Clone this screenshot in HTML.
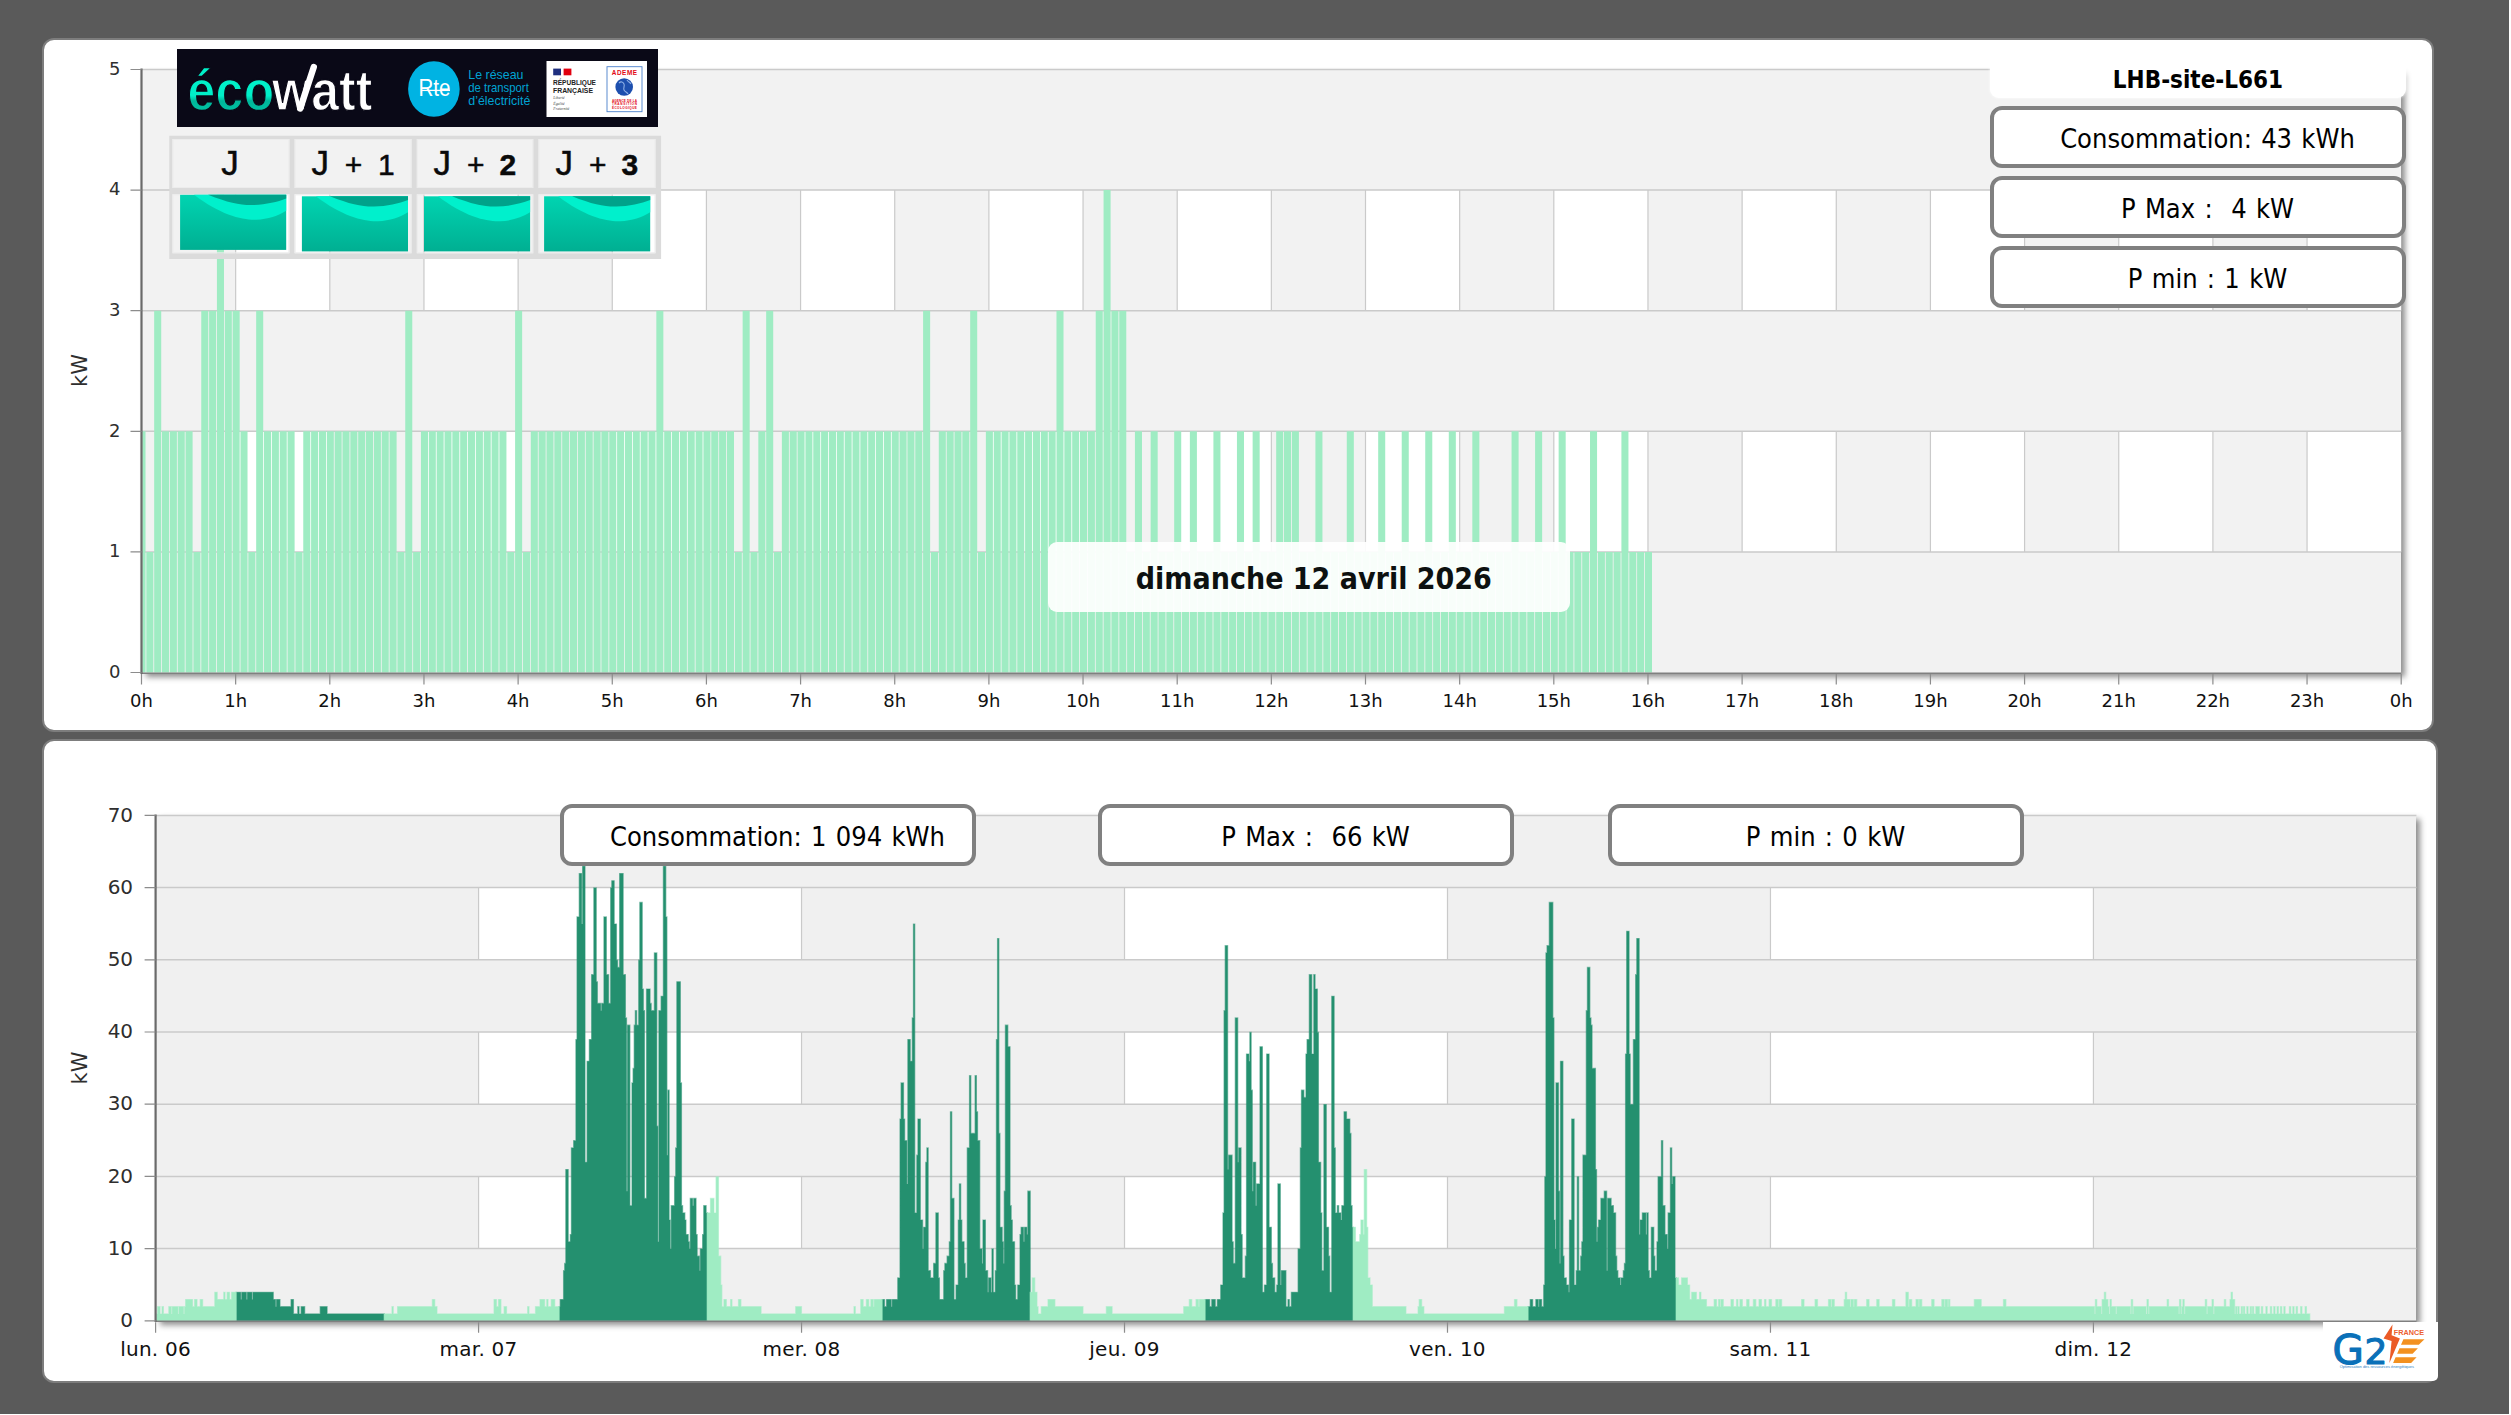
<!DOCTYPE html>
<html lang="fr"><head><meta charset="utf-8"><title>LHB-site-L661</title>
<style>
html,body{margin:0;padding:0}
body{width:2511px;height:1415px;background:#fff;position:relative;overflow:hidden;font-family:"DejaVu Sans Condensed","DejaVu Sans","Liberation Sans",sans-serif}
.panel{position:absolute;background:#fff;border:2px solid #7d7d7d;border-radius:12px;box-sizing:border-box}
.plot{position:absolute;box-shadow:4px 4px 6px rgba(0,0,0,.45)}
svg{position:absolute;left:0;top:0}
.ax{font-family:"DejaVu Sans","Liberation Sans",sans-serif;font-size:18px;fill:#2e2e2e}
.box{position:absolute;box-sizing:border-box;background:#fff;border:4px solid #808080;border-radius:12px;font-size:27px;color:#000;text-align:center;white-space:pre;padding-left:19px;word-spacing:1.6px}
.abs{position:absolute}
.box,#ttl,#dlab{font-stretch:condensed}
</style></head><body>
<div class="abs" style="left:0;top:0;width:2509.3px;height:1413.6px;background:#5a5a5a"></div>
<div class="panel" style="left:42px;top:38px;width:2392px;height:693.5px"></div>
<div class="panel" style="left:42px;top:738.5px;width:2396px;height:644px"></div>
<div class="plot" style="left:141.5px;top:69.5px;width:2259.7px;height:603px;background:#f2f2f2"></div>
<div class="plot" style="left:155.6px;top:815.4px;width:2260.8px;height:505.4px;background:#f0f0f0"></div>
<svg width="2511" height="1415" viewBox="0 0 2511 1415">
<rect x="235.65" y="431.3" width="94.15" height="120.6" fill="#fff"/><rect x="423.96" y="431.3" width="94.15" height="120.6" fill="#fff"/><rect x="612.27" y="431.3" width="94.15" height="120.6" fill="#fff"/><rect x="800.58" y="431.3" width="94.15" height="120.6" fill="#fff"/><rect x="988.89" y="431.3" width="94.15" height="120.6" fill="#fff"/><rect x="1177.2" y="431.3" width="94.15" height="120.6" fill="#fff"/><rect x="1365.5" y="431.3" width="94.15" height="120.6" fill="#fff"/><rect x="1553.81" y="431.3" width="94.15" height="120.6" fill="#fff"/><rect x="1742.12" y="431.3" width="94.15" height="120.6" fill="#fff"/><rect x="1930.43" y="431.3" width="94.15" height="120.6" fill="#fff"/><rect x="2118.74" y="431.3" width="94.15" height="120.6" fill="#fff"/><rect x="2307.05" y="431.3" width="94.15" height="120.6" fill="#fff"/><path d="M235.65 431.3v120.6M329.81 431.3v120.6M423.96 431.3v120.6M518.12 431.3v120.6M612.27 431.3v120.6M706.42 431.3v120.6M800.58 431.3v120.6M894.73 431.3v120.6M988.89 431.3v120.6M1083.04 431.3v120.6M1177.2 431.3v120.6M1271.35 431.3v120.6M1365.5 431.3v120.6M1459.66 431.3v120.6M1553.81 431.3v120.6M1647.97 431.3v120.6M1742.12 431.3v120.6M1836.27 431.3v120.6M1930.43 431.3v120.6M2024.58 431.3v120.6M2118.74 431.3v120.6M2212.89 431.3v120.6M2307.05 431.3v120.6" stroke="#cacaca" stroke-width="1.2" fill="none"/><rect x="235.65" y="190.1" width="94.15" height="120.6" fill="#fff"/><rect x="423.96" y="190.1" width="94.15" height="120.6" fill="#fff"/><rect x="612.27" y="190.1" width="94.15" height="120.6" fill="#fff"/><rect x="800.58" y="190.1" width="94.15" height="120.6" fill="#fff"/><rect x="988.89" y="190.1" width="94.15" height="120.6" fill="#fff"/><rect x="1177.2" y="190.1" width="94.15" height="120.6" fill="#fff"/><rect x="1365.5" y="190.1" width="94.15" height="120.6" fill="#fff"/><rect x="1553.81" y="190.1" width="94.15" height="120.6" fill="#fff"/><rect x="1742.12" y="190.1" width="94.15" height="120.6" fill="#fff"/><rect x="1930.43" y="190.1" width="94.15" height="120.6" fill="#fff"/><rect x="2118.74" y="190.1" width="94.15" height="120.6" fill="#fff"/><rect x="2307.05" y="190.1" width="94.15" height="120.6" fill="#fff"/><path d="M235.65 190.1v120.6M329.81 190.1v120.6M423.96 190.1v120.6M518.12 190.1v120.6M612.27 190.1v120.6M706.42 190.1v120.6M800.58 190.1v120.6M894.73 190.1v120.6M988.89 190.1v120.6M1083.04 190.1v120.6M1177.2 190.1v120.6M1271.35 190.1v120.6M1365.5 190.1v120.6M1459.66 190.1v120.6M1553.81 190.1v120.6M1647.97 190.1v120.6M1742.12 190.1v120.6M1836.27 190.1v120.6M1930.43 190.1v120.6M2024.58 190.1v120.6M2118.74 190.1v120.6M2212.89 190.1v120.6M2307.05 190.1v120.6" stroke="#cacaca" stroke-width="1.2" fill="none"/><path d="M141.5 551.9H2401.2M141.5 431.3H2401.2M141.5 310.7H2401.2M141.5 190.1H2401.2M141.5 69.5H2401.2" stroke="#cacaca" stroke-width="1.5" fill="none"/>
<path d="M142.3 672.5V431.3H145.52V672.5ZM146.33 672.5V551.9H153.37V672.5ZM154.17 672.5V310.7H161.21V672.5ZM162.02 672.5V431.3H169.06V672.5ZM169.86 672.5V431.3H176.9V672.5ZM177.71 672.5V431.3H184.75V672.5ZM185.56 672.5V431.3H192.6V672.5ZM193.4 672.5V551.9H200.44V672.5ZM201.25 672.5V310.7H208.29V672.5ZM209.1 672.5V310.7H216.14V672.5ZM216.94 672.5V190.1H223.98V672.5ZM224.79 672.5V310.7H231.83V672.5ZM232.63 672.5V310.7H239.67V672.5ZM240.48 672.5V431.3H247.52V672.5ZM248.33 672.5V551.9H255.37V672.5ZM256.17 672.5V310.7H263.21V672.5ZM264.02 672.5V431.3H271.06V672.5ZM271.87 672.5V431.3H278.91V672.5ZM279.71 672.5V431.3H286.75V672.5ZM287.56 672.5V431.3H294.6V672.5ZM295.4 672.5V551.9H302.44V672.5ZM303.25 672.5V431.3H310.29V672.5ZM311.1 672.5V431.3H318.14V672.5ZM318.94 672.5V431.3H325.98V672.5ZM326.79 672.5V431.3H333.83V672.5ZM334.63 672.5V431.3H341.67V672.5ZM342.48 672.5V431.3H349.52V672.5ZM350.33 672.5V431.3H357.37V672.5ZM358.17 672.5V431.3H365.21V672.5ZM366.02 672.5V431.3H373.06V672.5ZM373.87 672.5V431.3H380.91V672.5ZM381.71 672.5V431.3H388.75V672.5ZM389.56 672.5V431.3H396.6V672.5ZM397.4 672.5V551.9H404.44V672.5ZM405.25 672.5V310.7H412.29V672.5ZM413.1 672.5V551.9H420.14V672.5ZM420.94 672.5V431.3H427.98V672.5ZM428.79 672.5V431.3H435.83V672.5ZM436.63 672.5V431.3H443.67V672.5ZM444.48 672.5V431.3H451.52V672.5ZM452.33 672.5V431.3H459.37V672.5ZM460.17 672.5V431.3H467.21V672.5ZM468.02 672.5V431.3H475.06V672.5ZM475.87 672.5V431.3H482.91V672.5ZM483.71 672.5V431.3H490.75V672.5ZM491.56 672.5V431.3H498.6V672.5ZM499.4 672.5V431.3H506.44V672.5ZM507.25 672.5V551.9H514.29V672.5ZM515.1 672.5V310.7H522.14V672.5ZM522.94 672.5V551.9H529.98V672.5ZM530.79 672.5V431.3H537.83V672.5ZM538.64 672.5V431.3H545.68V672.5ZM546.48 672.5V431.3H553.52V672.5ZM554.33 672.5V431.3H561.37V672.5ZM562.17 672.5V431.3H569.21V672.5ZM570.02 672.5V431.3H577.06V672.5ZM577.87 672.5V431.3H584.91V672.5ZM585.71 672.5V431.3H592.75V672.5ZM593.56 672.5V431.3H600.6V672.5ZM601.4 672.5V431.3H608.44V672.5ZM609.25 672.5V431.3H616.29V672.5ZM617.1 672.5V431.3H624.14V672.5ZM624.94 672.5V431.3H631.98V672.5ZM632.79 672.5V431.3H639.83V672.5ZM640.64 672.5V431.3H647.68V672.5ZM648.48 672.5V431.3H655.52V672.5ZM656.33 672.5V310.7H663.37V672.5ZM664.17 672.5V431.3H671.21V672.5ZM672.02 672.5V431.3H679.06V672.5ZM679.87 672.5V431.3H686.91V672.5ZM687.71 672.5V431.3H694.75V672.5ZM695.56 672.5V431.3H702.6V672.5ZM703.4 672.5V431.3H710.44V672.5ZM711.25 672.5V431.3H718.29V672.5ZM719.1 672.5V431.3H726.14V672.5ZM726.94 672.5V431.3H733.98V672.5ZM734.79 672.5V551.9H741.83V672.5ZM742.64 672.5V310.7H749.68V672.5ZM750.48 672.5V551.9H757.52V672.5ZM758.33 672.5V431.3H765.37V672.5ZM766.17 672.5V310.7H773.21V672.5ZM774.02 672.5V551.9H781.06V672.5ZM781.87 672.5V431.3H788.91V672.5ZM789.71 672.5V431.3H796.75V672.5ZM797.56 672.5V431.3H804.6V672.5ZM805.41 672.5V431.3H812.45V672.5ZM813.25 672.5V431.3H820.29V672.5ZM821.1 672.5V431.3H828.14V672.5ZM828.94 672.5V431.3H835.98V672.5ZM836.79 672.5V431.3H843.83V672.5ZM844.64 672.5V431.3H851.68V672.5ZM852.48 672.5V431.3H859.52V672.5ZM860.33 672.5V431.3H867.37V672.5ZM868.17 672.5V431.3H875.21V672.5ZM876.02 672.5V431.3H883.06V672.5ZM883.87 672.5V431.3H890.91V672.5ZM891.71 672.5V431.3H898.75V672.5ZM899.56 672.5V431.3H906.6V672.5ZM907.41 672.5V431.3H914.45V672.5ZM915.25 672.5V431.3H922.29V672.5ZM923.1 672.5V310.7H930.14V672.5ZM930.94 672.5V551.9H937.98V672.5ZM938.79 672.5V431.3H945.83V672.5ZM946.64 672.5V431.3H953.68V672.5ZM954.48 672.5V431.3H961.52V672.5ZM962.33 672.5V431.3H969.37V672.5ZM970.18 672.5V310.7H977.22V672.5ZM978.02 672.5V551.9H985.06V672.5ZM985.87 672.5V431.3H992.91V672.5ZM993.71 672.5V431.3H1000.75V672.5ZM1001.56 672.5V431.3H1008.6V672.5ZM1009.41 672.5V431.3H1016.45V672.5ZM1017.25 672.5V431.3H1024.29V672.5ZM1025.1 672.5V431.3H1032.14V672.5ZM1032.94 672.5V431.3H1039.98V672.5ZM1040.79 672.5V431.3H1047.83V672.5ZM1048.64 672.5V431.3H1055.68V672.5ZM1056.48 672.5V310.7H1063.52V672.5ZM1064.33 672.5V431.3H1071.37V672.5ZM1072.18 672.5V431.3H1079.22V672.5ZM1080.02 672.5V431.3H1087.06V672.5ZM1087.87 672.5V431.3H1094.91V672.5ZM1095.71 672.5V310.7H1102.75V672.5ZM1103.56 672.5V190.1H1110.6V672.5ZM1111.41 672.5V310.7H1118.45V672.5ZM1119.25 672.5V310.7H1126.29V672.5ZM1127.1 672.5V551.9H1134.14V672.5ZM1134.94 672.5V431.3H1141.98V672.5ZM1142.79 672.5V551.9H1149.83V672.5ZM1150.64 672.5V431.3H1157.68V672.5ZM1158.48 672.5V551.9H1165.52V672.5ZM1166.33 672.5V551.9H1173.37V672.5ZM1174.18 672.5V431.3H1181.22V672.5ZM1182.02 672.5V551.9H1189.06V672.5ZM1189.87 672.5V431.3H1196.91V672.5ZM1197.71 672.5V551.9H1204.75V672.5ZM1205.56 672.5V551.9H1212.6V672.5ZM1213.41 672.5V431.3H1220.45V672.5ZM1221.25 672.5V551.9H1228.29V672.5ZM1229.1 672.5V551.9H1236.14V672.5ZM1236.95 672.5V431.3H1243.99V672.5ZM1244.79 672.5V551.9H1251.83V672.5ZM1252.64 672.5V431.3H1259.68V672.5ZM1260.48 672.5V551.9H1267.52V672.5ZM1268.33 672.5V551.9H1275.37V672.5ZM1276.18 672.5V431.3H1283.22V672.5ZM1284.02 672.5V431.3H1291.06V672.5ZM1291.87 672.5V431.3H1298.91V672.5ZM1299.71 672.5V551.9H1306.75V672.5ZM1307.56 672.5V551.9H1314.6V672.5ZM1315.41 672.5V431.3H1322.45V672.5ZM1323.25 672.5V551.9H1330.29V672.5ZM1331.1 672.5V551.9H1338.14V672.5ZM1338.95 672.5V551.9H1345.99V672.5ZM1346.79 672.5V431.3H1353.83V672.5ZM1354.64 672.5V551.9H1361.68V672.5ZM1362.48 672.5V551.9H1369.52V672.5ZM1370.33 672.5V551.9H1377.37V672.5ZM1378.18 672.5V431.3H1385.22V672.5ZM1386.02 672.5V551.9H1393.06V672.5ZM1393.87 672.5V551.9H1400.91V672.5ZM1401.72 672.5V431.3H1408.76V672.5ZM1409.56 672.5V551.9H1416.6V672.5ZM1417.41 672.5V551.9H1424.45V672.5ZM1425.25 672.5V431.3H1432.29V672.5ZM1433.1 672.5V551.9H1440.14V672.5ZM1440.95 672.5V551.9H1447.99V672.5ZM1448.79 672.5V431.3H1455.83V672.5ZM1456.64 672.5V551.9H1463.68V672.5ZM1464.48 672.5V551.9H1471.52V672.5ZM1472.33 672.5V431.3H1479.37V672.5ZM1480.18 672.5V551.9H1487.22V672.5ZM1488.02 672.5V551.9H1495.06V672.5ZM1495.87 672.5V551.9H1502.91V672.5ZM1503.72 672.5V551.9H1510.76V672.5ZM1511.56 672.5V431.3H1518.6V672.5ZM1519.41 672.5V551.9H1526.45V672.5ZM1527.25 672.5V551.9H1534.29V672.5ZM1535.1 672.5V431.3H1542.14V672.5ZM1542.95 672.5V551.9H1549.99V672.5ZM1550.79 672.5V551.9H1557.83V672.5ZM1558.64 672.5V431.3H1565.68V672.5ZM1566.48 672.5V551.9H1573.52V672.5ZM1574.33 672.5V551.9H1581.37V672.5ZM1582.18 672.5V551.9H1589.22V672.5ZM1590.02 672.5V431.3H1597.06V672.5ZM1597.87 672.5V551.9H1604.91V672.5ZM1605.72 672.5V551.9H1612.76V672.5ZM1613.56 672.5V551.9H1620.6V672.5ZM1621.41 672.5V431.3H1628.45V672.5ZM1629.25 672.5V551.9H1636.29V672.5ZM1637.1 672.5V551.9H1644.14V672.5ZM1644.95 672.5V551.9H1651.99V672.5Z" fill="#9fecc3"/>
<path d="M141.5 673.2H2401.2" stroke="#808080" stroke-width="1.4" fill="none"/><path d="M141.5 68.5V673.9" stroke="#6a6a6a" stroke-width="2.2" fill="none"/><path d="M141.5 672.5h-11M141.5 551.9h-11M141.5 431.3h-11M141.5 310.7h-11M141.5 190.1h-11M141.5 69.5h-11M141.5 674v10.5M235.65 674v10.5M329.81 674v10.5M423.96 674v10.5M518.12 674v10.5M612.27 674v10.5M706.42 674v10.5M800.58 674v10.5M894.73 674v10.5M988.89 674v10.5M1083.04 674v10.5M1177.2 674v10.5M1271.35 674v10.5M1365.5 674v10.5M1459.66 674v10.5M1553.81 674v10.5M1647.97 674v10.5M1742.12 674v10.5M1836.27 674v10.5M1930.43 674v10.5M2024.58 674v10.5M2118.74 674v10.5M2212.89 674v10.5M2307.05 674v10.5M2401.2 674v10.5" stroke="#8c8c8c" stroke-width="1.2" fill="none"/>
<text class="ax" x="120.5" y="677.7" text-anchor="end">0</text><text class="ax" x="120.5" y="557.1" text-anchor="end">1</text><text class="ax" x="120.5" y="436.5" text-anchor="end">2</text><text class="ax" x="120.5" y="315.9" text-anchor="end">3</text><text class="ax" x="120.5" y="195.3" text-anchor="end">4</text><text class="ax" x="120.5" y="74.7" text-anchor="end">5</text><text class="ax" fill="#111" style="fill:#111" x="141.5" y="707" text-anchor="middle">0h</text><text class="ax" fill="#111" style="fill:#111" x="235.65" y="707" text-anchor="middle">1h</text><text class="ax" fill="#111" style="fill:#111" x="329.81" y="707" text-anchor="middle">2h</text><text class="ax" fill="#111" style="fill:#111" x="423.96" y="707" text-anchor="middle">3h</text><text class="ax" fill="#111" style="fill:#111" x="518.12" y="707" text-anchor="middle">4h</text><text class="ax" fill="#111" style="fill:#111" x="612.27" y="707" text-anchor="middle">5h</text><text class="ax" fill="#111" style="fill:#111" x="706.42" y="707" text-anchor="middle">6h</text><text class="ax" fill="#111" style="fill:#111" x="800.58" y="707" text-anchor="middle">7h</text><text class="ax" fill="#111" style="fill:#111" x="894.73" y="707" text-anchor="middle">8h</text><text class="ax" fill="#111" style="fill:#111" x="988.89" y="707" text-anchor="middle">9h</text><text class="ax" fill="#111" style="fill:#111" x="1083.04" y="707" text-anchor="middle">10h</text><text class="ax" fill="#111" style="fill:#111" x="1177.2" y="707" text-anchor="middle">11h</text><text class="ax" fill="#111" style="fill:#111" x="1271.35" y="707" text-anchor="middle">12h</text><text class="ax" fill="#111" style="fill:#111" x="1365.5" y="707" text-anchor="middle">13h</text><text class="ax" fill="#111" style="fill:#111" x="1459.66" y="707" text-anchor="middle">14h</text><text class="ax" fill="#111" style="fill:#111" x="1553.81" y="707" text-anchor="middle">15h</text><text class="ax" fill="#111" style="fill:#111" x="1647.97" y="707" text-anchor="middle">16h</text><text class="ax" fill="#111" style="fill:#111" x="1742.12" y="707" text-anchor="middle">17h</text><text class="ax" fill="#111" style="fill:#111" x="1836.27" y="707" text-anchor="middle">18h</text><text class="ax" fill="#111" style="fill:#111" x="1930.43" y="707" text-anchor="middle">19h</text><text class="ax" fill="#111" style="fill:#111" x="2024.58" y="707" text-anchor="middle">20h</text><text class="ax" fill="#111" style="fill:#111" x="2118.74" y="707" text-anchor="middle">21h</text><text class="ax" fill="#111" style="fill:#111" x="2212.89" y="707" text-anchor="middle">22h</text><text class="ax" fill="#111" style="fill:#111" x="2307.05" y="707" text-anchor="middle">23h</text><text class="ax" fill="#111" style="fill:#111" x="2401.2" y="707" text-anchor="middle">0h</text><text class="ax" style="font-size:21px" transform="translate(86.5 370.5) rotate(-90)" text-anchor="middle">kW</text>
<rect x="478.57" y="1176.4" width="322.97" height="72.2" fill="#fff"/><rect x="1124.51" y="1176.4" width="322.97" height="72.2" fill="#fff"/><rect x="1770.46" y="1176.4" width="322.97" height="72.2" fill="#fff"/><path d="M478.57 1176.4v72.2M801.54 1176.4v72.2M1124.51 1176.4v72.2M1447.49 1176.4v72.2M1770.46 1176.4v72.2M2093.43 1176.4v72.2" stroke="#cacaca" stroke-width="1.2" fill="none"/><rect x="478.57" y="1032" width="322.97" height="72.2" fill="#fff"/><rect x="1124.51" y="1032" width="322.97" height="72.2" fill="#fff"/><rect x="1770.46" y="1032" width="322.97" height="72.2" fill="#fff"/><path d="M478.57 1032v72.2M801.54 1032v72.2M1124.51 1032v72.2M1447.49 1032v72.2M1770.46 1032v72.2M2093.43 1032v72.2" stroke="#cacaca" stroke-width="1.2" fill="none"/><rect x="478.57" y="887.6" width="322.97" height="72.2" fill="#fff"/><rect x="1124.51" y="887.6" width="322.97" height="72.2" fill="#fff"/><rect x="1770.46" y="887.6" width="322.97" height="72.2" fill="#fff"/><path d="M478.57 887.6v72.2M801.54 887.6v72.2M1124.51 887.6v72.2M1447.49 887.6v72.2M1770.46 887.6v72.2M2093.43 887.6v72.2" stroke="#cacaca" stroke-width="1.2" fill="none"/><path d="M155.6 1248.6H2416.4M155.6 1176.4H2416.4M155.6 1104.2H2416.4M155.6 1032H2416.4M155.6 959.8H2416.4M155.6 887.6H2416.4M155.6 815.4H2416.4" stroke="#cacaca" stroke-width="1.5" fill="none"/>
<path d="M236.14 1320.8V1292.32H237.34V1320.8ZM237.26 1320.8V1292.32H238.46V1320.8ZM238.39 1320.8V1292.32H239.59V1320.8ZM239.51 1320.8V1292.32H240.71V1320.8ZM240.63 1320.8V1299.54H241.83V1320.8ZM241.75 1320.8V1292.32H242.95V1320.8ZM242.87 1320.8V1292.32H244.07V1320.8ZM243.99 1320.8V1292.32H245.19V1320.8ZM245.11 1320.8V1292.32H246.31V1320.8ZM246.24 1320.8V1299.54H247.44V1320.8ZM247.36 1320.8V1292.32H248.56V1320.8ZM248.48 1320.8V1292.32H249.68V1320.8ZM249.6 1320.8V1292.32H250.8V1320.8ZM250.72 1320.8V1292.32H251.92V1320.8ZM251.84 1320.8V1299.54H253.04V1320.8ZM252.96 1320.8V1292.32H254.16V1320.8ZM254.09 1320.8V1292.32H255.29V1320.8ZM255.21 1320.8V1292.32H256.41V1320.8ZM256.33 1320.8V1292.32H257.53V1320.8ZM257.45 1320.8V1292.32H258.65V1320.8ZM258.57 1320.8V1292.32H259.77V1320.8ZM259.69 1320.8V1292.32H260.89V1320.8ZM260.81 1320.8V1292.32H262.01V1320.8ZM261.94 1320.8V1292.32H263.14V1320.8ZM263.06 1320.8V1292.32H264.26V1320.8ZM264.18 1320.8V1292.32H265.38V1320.8ZM265.3 1320.8V1292.32H266.5V1320.8ZM266.42 1320.8V1292.32H267.62V1320.8ZM267.54 1320.8V1292.32H268.74V1320.8ZM268.66 1320.8V1292.32H269.86V1320.8ZM269.79 1320.8V1292.32H270.99V1320.8ZM270.91 1320.8V1292.32H272.11V1320.8ZM272.03 1320.8V1292.32H273.23V1320.8ZM273.15 1320.8V1299.54H274.35V1320.8ZM274.27 1320.8V1299.54H275.47V1320.8ZM275.39 1320.8V1306.76H276.59V1320.8ZM276.51 1320.8V1299.54H277.71V1320.8ZM277.64 1320.8V1299.54H278.84V1320.8ZM278.76 1320.8V1299.54H279.96V1320.8ZM279.88 1320.8V1306.76H281.08V1320.8ZM281 1320.8V1306.76H282.2V1320.8ZM282.12 1320.8V1306.76H283.32V1320.8ZM283.24 1320.8V1306.76H284.44V1320.8ZM284.36 1320.8V1306.76H285.56V1320.8ZM285.49 1320.8V1306.76H286.69V1320.8ZM286.61 1320.8V1306.76H287.81V1320.8ZM287.73 1320.8V1306.76H288.93V1320.8ZM288.85 1320.8V1306.76H290.05V1320.8ZM289.97 1320.8V1306.76H291.17V1320.8ZM291.09 1320.8V1299.54H292.29V1320.8ZM292.21 1320.8V1299.54H293.41V1320.8ZM293.34 1320.8V1313.98H294.54V1320.8ZM294.46 1320.8V1313.98H295.66V1320.8ZM295.58 1320.8V1313.98H296.78V1320.8ZM296.7 1320.8V1313.98H297.9V1320.8ZM297.82 1320.8V1306.76H299.02V1320.8ZM298.94 1320.8V1313.98H300.14V1320.8ZM300.06 1320.8V1313.98H301.26V1320.8ZM301.19 1320.8V1306.76H302.39V1320.8ZM302.31 1320.8V1306.76H303.51V1320.8ZM303.43 1320.8V1306.76H304.63V1320.8ZM304.55 1320.8V1313.98H305.75V1320.8ZM305.67 1320.8V1313.98H306.87V1320.8ZM306.79 1320.8V1313.98H307.99V1320.8ZM307.91 1320.8V1313.98H309.11V1320.8ZM309.04 1320.8V1313.98H310.24V1320.8ZM310.16 1320.8V1313.98H311.36V1320.8ZM311.28 1320.8V1313.98H312.48V1320.8ZM312.4 1320.8V1313.98H313.6V1320.8ZM313.52 1320.8V1313.98H314.72V1320.8ZM314.64 1320.8V1313.98H315.84V1320.8ZM315.76 1320.8V1313.98H316.96V1320.8ZM316.89 1320.8V1313.98H318.09V1320.8ZM318.01 1320.8V1313.98H319.21V1320.8ZM319.13 1320.8V1313.98H320.33V1320.8ZM320.25 1320.8V1306.76H321.45V1320.8ZM321.37 1320.8V1306.76H322.57V1320.8ZM322.49 1320.8V1306.76H323.69V1320.8ZM323.61 1320.8V1306.76H324.81V1320.8ZM324.74 1320.8V1306.76H325.94V1320.8ZM325.86 1320.8V1306.76H327.06V1320.8ZM326.98 1320.8V1313.98H328.18V1320.8ZM328.1 1320.8V1313.98H329.3V1320.8ZM329.22 1320.8V1313.98H330.42V1320.8ZM330.34 1320.8V1313.98H331.54V1320.8ZM331.46 1320.8V1313.98H332.66V1320.8ZM332.59 1320.8V1313.98H333.79V1320.8ZM333.71 1320.8V1313.98H334.91V1320.8ZM334.83 1320.8V1313.98H336.03V1320.8ZM335.95 1320.8V1313.98H337.15V1320.8ZM337.07 1320.8V1313.98H338.27V1320.8ZM338.19 1320.8V1313.98H339.39V1320.8ZM339.31 1320.8V1313.98H340.51V1320.8ZM340.44 1320.8V1313.98H341.64V1320.8ZM341.56 1320.8V1313.98H342.76V1320.8ZM342.68 1320.8V1313.98H343.88V1320.8ZM343.8 1320.8V1313.98H345V1320.8ZM344.92 1320.8V1313.98H346.12V1320.8ZM346.04 1320.8V1313.98H347.24V1320.8ZM347.16 1320.8V1313.98H348.36V1320.8ZM348.29 1320.8V1313.98H349.49V1320.8ZM349.41 1320.8V1313.98H350.61V1320.8ZM350.53 1320.8V1313.98H351.73V1320.8ZM351.65 1320.8V1313.98H352.85V1320.8ZM352.77 1320.8V1313.98H353.97V1320.8ZM353.89 1320.8V1313.98H355.09V1320.8ZM355.01 1320.8V1313.98H356.21V1320.8ZM356.14 1320.8V1313.98H357.34V1320.8ZM357.26 1320.8V1313.98H358.46V1320.8ZM358.38 1320.8V1313.98H359.58V1320.8ZM359.5 1320.8V1313.98H360.7V1320.8ZM360.62 1320.8V1313.98H361.82V1320.8ZM361.74 1320.8V1313.98H362.94V1320.8ZM362.86 1320.8V1313.98H364.06V1320.8ZM363.99 1320.8V1313.98H365.19V1320.8ZM365.11 1320.8V1313.98H366.31V1320.8ZM366.23 1320.8V1313.98H367.43V1320.8ZM367.35 1320.8V1313.98H368.55V1320.8ZM368.47 1320.8V1313.98H369.67V1320.8ZM369.59 1320.8V1313.98H370.79V1320.8ZM370.71 1320.8V1313.98H371.91V1320.8ZM371.84 1320.8V1313.98H373.04V1320.8ZM372.96 1320.8V1313.98H374.16V1320.8ZM374.08 1320.8V1313.98H375.28V1320.8ZM375.2 1320.8V1313.98H376.4V1320.8ZM376.32 1320.8V1313.98H377.52V1320.8ZM377.44 1320.8V1313.98H378.64V1320.8ZM378.56 1320.8V1313.98H379.76V1320.8ZM379.69 1320.8V1313.98H380.89V1320.8ZM380.81 1320.8V1313.98H382.01V1320.8ZM381.93 1320.8V1313.98H383.13V1320.8ZM383.05 1320.8V1313.98H384.25V1320.8ZM559.11 1320.8V1306.76H560.31V1320.8ZM560.24 1320.8V1299.54H561.44V1320.8ZM561.36 1320.8V1299.54H562.56V1320.8ZM562.48 1320.8V1299.54H563.68V1320.8ZM563.6 1320.8V1270.66H564.8V1320.8ZM564.72 1320.8V1263.44H565.92V1320.8ZM565.84 1320.8V1169.58H567.04V1320.8ZM566.96 1320.8V1169.58H568.16V1320.8ZM568.09 1320.8V1241.78H569.29V1320.8ZM569.21 1320.8V1241.78H570.41V1320.8ZM570.33 1320.8V1234.56H571.53V1320.8ZM571.45 1320.8V1147.92H572.65V1320.8ZM572.57 1320.8V1147.92H573.77V1320.8ZM573.69 1320.8V1140.7H574.89V1320.8ZM574.81 1320.8V1140.7H576.01V1320.8ZM575.94 1320.8V1039.62H577.14V1320.8ZM577.06 1320.8V916.88H578.26V1320.8ZM578.18 1320.8V916.88H579.38V1320.8ZM579.3 1320.8V873.56H580.5V1320.8ZM580.42 1320.8V873.56H581.62V1320.8ZM581.54 1320.8V924.1H582.74V1320.8ZM582.66 1320.8V866.34H583.86V1320.8ZM583.79 1320.8V866.34H584.99V1320.8ZM584.91 1320.8V1162.36H586.11V1320.8ZM586.03 1320.8V1162.36H587.23V1320.8ZM587.15 1320.8V1061.28H588.35V1320.8ZM588.27 1320.8V1061.28H589.47V1320.8ZM589.39 1320.8V1039.62H590.59V1320.8ZM590.51 1320.8V1039.62H591.71V1320.8ZM591.64 1320.8V974.64H592.84V1320.8ZM592.76 1320.8V974.64H593.96V1320.8ZM593.88 1320.8V888H595.08V1320.8ZM595 1320.8V888H596.2V1320.8ZM596.12 1320.8V981.86H597.32V1320.8ZM597.24 1320.8V1003.52H598.44V1320.8ZM598.36 1320.8V1003.52H599.56V1320.8ZM599.49 1320.8V1003.52H600.69V1320.8ZM600.61 1320.8V1010.74H601.81V1320.8ZM601.73 1320.8V1003.52H602.93V1320.8ZM602.85 1320.8V1003.52H604.05V1320.8ZM603.97 1320.8V916.88H605.17V1320.8ZM605.09 1320.8V916.88H606.29V1320.8ZM606.21 1320.8V974.64H607.41V1320.8ZM607.34 1320.8V974.64H608.54V1320.8ZM608.46 1320.8V1003.52H609.66V1320.8ZM609.58 1320.8V1003.52H610.78V1320.8ZM610.7 1320.8V888H611.9V1320.8ZM611.82 1320.8V880.78H613.02V1320.8ZM612.94 1320.8V880.78H614.14V1320.8ZM614.06 1320.8V924.1H615.26V1320.8ZM615.19 1320.8V924.1H616.39V1320.8ZM616.31 1320.8V960.2H617.51V1320.8ZM617.43 1320.8V967.42H618.63V1320.8ZM618.55 1320.8V967.42H619.75V1320.8ZM619.67 1320.8V873.56H620.87V1320.8ZM620.79 1320.8V873.56H621.99V1320.8ZM621.91 1320.8V873.56H623.11V1320.8ZM623.04 1320.8V974.64H624.24V1320.8ZM624.16 1320.8V974.64H625.36V1320.8ZM625.28 1320.8V1017.96H626.48V1320.8ZM626.4 1320.8V1191.24H627.6V1320.8ZM627.52 1320.8V1025.18H628.72V1320.8ZM628.64 1320.8V1025.18H629.84V1320.8ZM629.76 1320.8V1205.68H630.96V1320.8ZM630.89 1320.8V1205.68H632.09V1320.8ZM632.01 1320.8V1082.94H633.21V1320.8ZM633.13 1320.8V1068.5H634.33V1320.8ZM634.25 1320.8V1025.18H635.45V1320.8ZM635.37 1320.8V1010.74H636.57V1320.8ZM636.49 1320.8V1025.18H637.69V1320.8ZM637.61 1320.8V1025.18H638.81V1320.8ZM638.74 1320.8V960.2H639.94V1320.8ZM639.86 1320.8V902.44H641.06V1320.8ZM640.98 1320.8V902.44H642.18V1320.8ZM642.1 1320.8V989.08H643.3V1320.8ZM643.22 1320.8V1010.74H644.42V1320.8ZM644.34 1320.8V1198.46H645.54V1320.8ZM645.46 1320.8V1198.46H646.66V1320.8ZM646.59 1320.8V989.08H647.79V1320.8ZM647.71 1320.8V989.08H648.91V1320.8ZM648.83 1320.8V989.08H650.03V1320.8ZM649.95 1320.8V1003.52H651.15V1320.8ZM651.07 1320.8V1010.74H652.27V1320.8ZM652.19 1320.8V1010.74H653.39V1320.8ZM653.31 1320.8V1010.74H654.51V1320.8ZM654.44 1320.8V952.98H655.64V1320.8ZM655.56 1320.8V952.98H656.76V1320.8ZM656.68 1320.8V1126.26H657.88V1320.8ZM657.8 1320.8V1241.78H659V1320.8ZM658.92 1320.8V1010.74H660.12V1320.8ZM660.04 1320.8V1010.74H661.24V1320.8ZM661.16 1320.8V996.3H662.36V1320.8ZM662.29 1320.8V996.3H663.49V1320.8ZM663.41 1320.8V866.34H664.61V1320.8ZM664.53 1320.8V866.34H665.73V1320.8ZM665.65 1320.8V916.88H666.85V1320.8ZM666.77 1320.8V1155.14H667.97V1320.8ZM667.89 1320.8V1090.16H669.09V1320.8ZM669.01 1320.8V1220.12H670.21V1320.8ZM670.14 1320.8V1249H671.34V1320.8ZM671.26 1320.8V1205.68H672.46V1320.8ZM672.38 1320.8V1205.68H673.58V1320.8ZM673.5 1320.8V1205.68H674.7V1320.8ZM674.62 1320.8V1176.8H675.82V1320.8ZM675.74 1320.8V1147.92H676.94V1320.8ZM676.86 1320.8V981.86H678.06V1320.8ZM677.99 1320.8V981.86H679.19V1320.8ZM679.11 1320.8V981.86H680.31V1320.8ZM680.23 1320.8V1082.94H681.43V1320.8ZM681.35 1320.8V1205.68H682.55V1320.8ZM682.47 1320.8V1212.9H683.67V1320.8ZM683.59 1320.8V1212.9H684.79V1320.8ZM684.71 1320.8V1220.12H685.91V1320.8ZM685.84 1320.8V1234.56H687.04V1320.8ZM686.96 1320.8V1234.56H688.16V1320.8ZM688.08 1320.8V1241.78H689.28V1320.8ZM689.2 1320.8V1249H690.4V1320.8ZM690.32 1320.8V1198.46H691.52V1320.8ZM691.44 1320.8V1198.46H692.64V1320.8ZM692.56 1320.8V1205.68H693.76V1320.8ZM693.69 1320.8V1198.46H694.89V1320.8ZM694.81 1320.8V1198.46H696.01V1320.8ZM695.93 1320.8V1234.56H697.13V1320.8ZM697.05 1320.8V1256.22H698.25V1320.8ZM698.17 1320.8V1256.22H699.37V1320.8ZM699.29 1320.8V1270.66H700.49V1320.8ZM700.41 1320.8V1249H701.61V1320.8ZM701.54 1320.8V1249H702.74V1320.8ZM702.66 1320.8V1234.56H703.86V1320.8ZM703.78 1320.8V1205.68H704.98V1320.8ZM704.9 1320.8V1205.68H706.1V1320.8ZM706.02 1320.8V1212.9H707.22V1320.8ZM882.09 1320.8V1299.54H883.29V1320.8ZM883.21 1320.8V1299.54H884.41V1320.8ZM884.33 1320.8V1306.76H885.53V1320.8ZM885.45 1320.8V1306.76H886.65V1320.8ZM886.57 1320.8V1299.54H887.77V1320.8ZM887.69 1320.8V1299.54H888.89V1320.8ZM888.81 1320.8V1299.54H890.01V1320.8ZM889.94 1320.8V1299.54H891.14V1320.8ZM891.06 1320.8V1306.76H892.26V1320.8ZM892.18 1320.8V1299.54H893.38V1320.8ZM893.3 1320.8V1299.54H894.5V1320.8ZM894.42 1320.8V1299.54H895.62V1320.8ZM895.54 1320.8V1299.54H896.74V1320.8ZM896.66 1320.8V1299.54H897.86V1320.8ZM897.79 1320.8V1277.88H898.99V1320.8ZM898.91 1320.8V1277.88H900.11V1320.8ZM900.03 1320.8V1119.04H901.23V1320.8ZM901.15 1320.8V1082.94H902.35V1320.8ZM902.27 1320.8V1082.94H903.47V1320.8ZM903.39 1320.8V1119.04H904.59V1320.8ZM904.51 1320.8V1140.7H905.71V1320.8ZM905.64 1320.8V1140.7H906.84V1320.8ZM906.76 1320.8V1184.02H907.96V1320.8ZM907.88 1320.8V1039.62H909.08V1320.8ZM909 1320.8V1039.62H910.2V1320.8ZM910.12 1320.8V1061.28H911.32V1320.8ZM911.24 1320.8V1061.28H912.44V1320.8ZM912.36 1320.8V1017.96H913.56V1320.8ZM913.49 1320.8V924.1H914.69V1320.8ZM914.61 1320.8V1212.9H915.81V1320.8ZM915.73 1320.8V1212.9H916.93V1320.8ZM916.85 1320.8V1155.14H918.05V1320.8ZM917.97 1320.8V1119.04H919.17V1320.8ZM919.09 1320.8V1119.04H920.29V1320.8ZM920.21 1320.8V1220.12H921.41V1320.8ZM921.34 1320.8V1220.12H922.54V1320.8ZM922.46 1320.8V1249H923.66V1320.8ZM923.58 1320.8V1227.34H924.78V1320.8ZM924.7 1320.8V1227.34H925.9V1320.8ZM925.82 1320.8V1162.36H927.02V1320.8ZM926.94 1320.8V1147.92H928.14V1320.8ZM928.06 1320.8V1270.66H929.26V1320.8ZM929.19 1320.8V1270.66H930.39V1320.8ZM930.31 1320.8V1277.88H931.51V1320.8ZM931.43 1320.8V1277.88H932.63V1320.8ZM932.55 1320.8V1277.88H933.75V1320.8ZM933.67 1320.8V1263.44H934.87V1320.8ZM934.79 1320.8V1263.44H935.99V1320.8ZM935.91 1320.8V1212.9H937.11V1320.8ZM937.04 1320.8V1212.9H938.24V1320.8ZM938.16 1320.8V1277.88H939.36V1320.8ZM939.28 1320.8V1299.54H940.48V1320.8ZM940.4 1320.8V1299.54H941.6V1320.8ZM941.52 1320.8V1299.54H942.72V1320.8ZM942.64 1320.8V1299.54H943.84V1320.8ZM943.76 1320.8V1270.66H944.96V1320.8ZM944.89 1320.8V1263.44H946.09V1320.8ZM946.01 1320.8V1263.44H947.21V1320.8ZM947.13 1320.8V1256.22H948.33V1320.8ZM948.25 1320.8V1256.22H949.45V1320.8ZM949.37 1320.8V1241.78H950.57V1320.8ZM950.49 1320.8V1111.82H951.69V1320.8ZM951.61 1320.8V1198.46H952.81V1320.8ZM952.74 1320.8V1198.46H953.94V1320.8ZM953.86 1320.8V1299.54H955.06V1320.8ZM954.98 1320.8V1299.54H956.18V1320.8ZM956.1 1320.8V1285.1H957.3V1320.8ZM957.22 1320.8V1285.1H958.42V1320.8ZM958.34 1320.8V1220.12H959.54V1320.8ZM959.46 1320.8V1184.02H960.66V1320.8ZM960.59 1320.8V1220.12H961.79V1320.8ZM961.71 1320.8V1241.78H962.91V1320.8ZM962.83 1320.8V1241.78H964.03V1320.8ZM963.95 1320.8V1263.44H965.15V1320.8ZM965.07 1320.8V1277.88H966.27V1320.8ZM966.19 1320.8V1277.88H967.39V1320.8ZM967.31 1320.8V1147.92H968.51V1320.8ZM968.44 1320.8V1147.92H969.64V1320.8ZM969.56 1320.8V1075.72H970.76V1320.8ZM970.68 1320.8V1133.48H971.88V1320.8ZM971.8 1320.8V1133.48H973V1320.8ZM972.92 1320.8V1133.48H974.12V1320.8ZM974.04 1320.8V1133.48H975.24V1320.8ZM975.16 1320.8V1075.72H976.36V1320.8ZM976.29 1320.8V1111.82H977.49V1320.8ZM977.41 1320.8V1140.7H978.61V1320.8ZM978.53 1320.8V1140.7H979.73V1320.8ZM979.65 1320.8V1249H980.85V1320.8ZM980.77 1320.8V1249H981.97V1320.8ZM981.89 1320.8V1263.44H983.09V1320.8ZM983.01 1320.8V1220.12H984.21V1320.8ZM984.14 1320.8V1220.12H985.34V1320.8ZM985.26 1320.8V1270.66H986.46V1320.8ZM986.38 1320.8V1270.66H987.58V1320.8ZM987.5 1320.8V1292.32H988.7V1320.8ZM988.62 1320.8V1277.88H989.82V1320.8ZM989.74 1320.8V1277.88H990.94V1320.8ZM990.86 1320.8V1292.32H992.06V1320.8ZM991.99 1320.8V1249H993.19V1320.8ZM993.11 1320.8V1292.32H994.31V1320.8ZM994.23 1320.8V1292.32H995.43V1320.8ZM995.35 1320.8V1270.66H996.55V1320.8ZM996.47 1320.8V1039.62H997.67V1320.8ZM997.59 1320.8V938.54H998.79V1320.8ZM998.71 1320.8V1133.48H999.91V1320.8ZM999.84 1320.8V1227.34H1001.04V1320.8ZM1000.96 1320.8V1227.34H1002.16V1320.8ZM1002.08 1320.8V1241.78H1003.28V1320.8ZM1003.2 1320.8V1263.44H1004.4V1320.8ZM1004.32 1320.8V1191.24H1005.52V1320.8ZM1005.44 1320.8V1025.18H1006.64V1320.8ZM1006.56 1320.8V1025.18H1007.76V1320.8ZM1007.69 1320.8V1046.84H1008.89V1320.8ZM1008.81 1320.8V1046.84H1010.01V1320.8ZM1009.93 1320.8V1205.68H1011.13V1320.8ZM1011.05 1320.8V1220.12H1012.25V1320.8ZM1012.17 1320.8V1241.78H1013.37V1320.8ZM1013.29 1320.8V1241.78H1014.49V1320.8ZM1014.41 1320.8V1285.1H1015.61V1320.8ZM1015.54 1320.8V1299.54H1016.74V1320.8ZM1016.66 1320.8V1299.54H1017.86V1320.8ZM1017.78 1320.8V1285.1H1018.98V1320.8ZM1018.9 1320.8V1285.1H1020.1V1320.8ZM1020.02 1320.8V1234.56H1021.22V1320.8ZM1021.14 1320.8V1227.34H1022.34V1320.8ZM1022.26 1320.8V1227.34H1023.46V1320.8ZM1023.39 1320.8V1241.78H1024.59V1320.8ZM1024.51 1320.8V1227.34H1025.71V1320.8ZM1025.63 1320.8V1227.34H1026.83V1320.8ZM1026.75 1320.8V1234.56H1027.95V1320.8ZM1027.87 1320.8V1191.24H1029.07V1320.8ZM1028.99 1320.8V1191.24H1030.19V1320.8ZM1205.06 1320.8V1299.54H1206.26V1320.8ZM1206.18 1320.8V1299.54H1207.38V1320.8ZM1207.3 1320.8V1299.54H1208.5V1320.8ZM1208.42 1320.8V1299.54H1209.62V1320.8ZM1209.54 1320.8V1306.76H1210.74V1320.8ZM1210.66 1320.8V1306.76H1211.86V1320.8ZM1211.79 1320.8V1299.54H1212.99V1320.8ZM1212.91 1320.8V1299.54H1214.11V1320.8ZM1214.03 1320.8V1299.54H1215.23V1320.8ZM1215.15 1320.8V1306.76H1216.35V1320.8ZM1216.27 1320.8V1306.76H1217.47V1320.8ZM1217.39 1320.8V1299.54H1218.59V1320.8ZM1218.51 1320.8V1299.54H1219.71V1320.8ZM1219.64 1320.8V1299.54H1220.84V1320.8ZM1220.76 1320.8V1285.1H1221.96V1320.8ZM1221.88 1320.8V1285.1H1223.08V1320.8ZM1223 1320.8V1212.9H1224.2V1320.8ZM1224.12 1320.8V1010.74H1225.32V1320.8ZM1225.24 1320.8V945.76H1226.44V1320.8ZM1226.36 1320.8V945.76H1227.56V1320.8ZM1227.49 1320.8V1169.58H1228.69V1320.8ZM1228.61 1320.8V1155.14H1229.81V1320.8ZM1229.73 1320.8V1155.14H1230.93V1320.8ZM1230.85 1320.8V1155.14H1232.05V1320.8ZM1231.97 1320.8V1241.78H1233.17V1320.8ZM1233.09 1320.8V1263.44H1234.29V1320.8ZM1234.21 1320.8V1263.44H1235.41V1320.8ZM1235.34 1320.8V1017.96H1236.54V1320.8ZM1236.46 1320.8V1017.96H1237.66V1320.8ZM1237.58 1320.8V1162.36H1238.78V1320.8ZM1238.7 1320.8V1147.92H1239.9V1320.8ZM1239.82 1320.8V1147.92H1241.02V1320.8ZM1240.94 1320.8V1234.56H1242.14V1320.8ZM1242.06 1320.8V1277.88H1243.26V1320.8ZM1243.19 1320.8V1277.88H1244.39V1320.8ZM1244.31 1320.8V1277.88H1245.51V1320.8ZM1245.43 1320.8V1256.22H1246.63V1320.8ZM1246.55 1320.8V1054.06H1247.75V1320.8ZM1247.67 1320.8V1054.06H1248.87V1320.8ZM1248.79 1320.8V1061.28H1249.99V1320.8ZM1249.91 1320.8V1032.4H1251.11V1320.8ZM1251.04 1320.8V1090.16H1252.24V1320.8ZM1252.16 1320.8V1191.24H1253.36V1320.8ZM1253.28 1320.8V1162.36H1254.48V1320.8ZM1254.4 1320.8V1162.36H1255.6V1320.8ZM1255.52 1320.8V1205.68H1256.72V1320.8ZM1256.64 1320.8V1184.02H1257.84V1320.8ZM1257.76 1320.8V1184.02H1258.96V1320.8ZM1258.89 1320.8V1184.02H1260.09V1320.8ZM1260.01 1320.8V1046.84H1261.21V1320.8ZM1261.13 1320.8V1046.84H1262.33V1320.8ZM1262.25 1320.8V1292.32H1263.45V1320.8ZM1263.37 1320.8V1292.32H1264.57V1320.8ZM1264.49 1320.8V1285.1H1265.69V1320.8ZM1265.61 1320.8V1285.1H1266.81V1320.8ZM1266.74 1320.8V1054.06H1267.94V1320.8ZM1267.86 1320.8V1054.06H1269.06V1320.8ZM1268.98 1320.8V1227.34H1270.18V1320.8ZM1270.1 1320.8V1227.34H1271.3V1320.8ZM1271.22 1320.8V1263.44H1272.42V1320.8ZM1272.34 1320.8V1277.88H1273.54V1320.8ZM1273.46 1320.8V1277.88H1274.66V1320.8ZM1274.59 1320.8V1292.32H1275.79V1320.8ZM1275.71 1320.8V1292.32H1276.91V1320.8ZM1276.83 1320.8V1285.1H1278.03V1320.8ZM1277.95 1320.8V1184.02H1279.15V1320.8ZM1279.07 1320.8V1184.02H1280.27V1320.8ZM1280.19 1320.8V1285.1H1281.39V1320.8ZM1281.31 1320.8V1270.66H1282.51V1320.8ZM1282.44 1320.8V1270.66H1283.64V1320.8ZM1283.56 1320.8V1270.66H1284.76V1320.8ZM1284.68 1320.8V1270.66H1285.88V1320.8ZM1285.8 1320.8V1306.76H1287V1320.8ZM1286.92 1320.8V1306.76H1288.12V1320.8ZM1288.04 1320.8V1299.54H1289.24V1320.8ZM1289.16 1320.8V1306.76H1290.36V1320.8ZM1290.29 1320.8V1306.76H1291.49V1320.8ZM1291.41 1320.8V1292.32H1292.61V1320.8ZM1292.53 1320.8V1292.32H1293.73V1320.8ZM1293.65 1320.8V1292.32H1294.85V1320.8ZM1294.77 1320.8V1292.32H1295.97V1320.8ZM1295.89 1320.8V1292.32H1297.09V1320.8ZM1297.01 1320.8V1292.32H1298.21V1320.8ZM1298.14 1320.8V1249H1299.34V1320.8ZM1299.26 1320.8V1249H1300.46V1320.8ZM1300.38 1320.8V1147.92H1301.58V1320.8ZM1301.5 1320.8V1090.16H1302.7V1320.8ZM1302.62 1320.8V1090.16H1303.82V1320.8ZM1303.74 1320.8V1097.38H1304.94V1320.8ZM1304.86 1320.8V1097.38H1306.06V1320.8ZM1305.99 1320.8V1054.06H1307.19V1320.8ZM1307.11 1320.8V1039.62H1308.31V1320.8ZM1308.23 1320.8V1039.62H1309.43V1320.8ZM1309.35 1320.8V974.64H1310.55V1320.8ZM1310.47 1320.8V974.64H1311.67V1320.8ZM1311.59 1320.8V1054.06H1312.79V1320.8ZM1312.71 1320.8V1054.06H1313.91V1320.8ZM1313.84 1320.8V974.64H1315.04V1320.8ZM1314.96 1320.8V989.08H1316.16V1320.8ZM1316.08 1320.8V989.08H1317.28V1320.8ZM1317.2 1320.8V1032.4H1318.4V1320.8ZM1318.32 1320.8V1162.36H1319.52V1320.8ZM1319.44 1320.8V1162.36H1320.64V1320.8ZM1320.56 1320.8V1212.9H1321.76V1320.8ZM1321.69 1320.8V1270.66H1322.89V1320.8ZM1322.81 1320.8V1270.66H1324.01V1320.8ZM1323.93 1320.8V1104.6H1325.13V1320.8ZM1325.05 1320.8V1104.6H1326.25V1320.8ZM1326.17 1320.8V1227.34H1327.37V1320.8ZM1327.29 1320.8V1227.34H1328.49V1320.8ZM1328.41 1320.8V1256.22H1329.61V1320.8ZM1329.54 1320.8V1292.32H1330.74V1320.8ZM1330.66 1320.8V1292.32H1331.86V1320.8ZM1331.78 1320.8V996.3H1332.98V1320.8ZM1332.9 1320.8V996.3H1334.1V1320.8ZM1334.02 1320.8V1147.92H1335.22V1320.8ZM1335.14 1320.8V1212.9H1336.34V1320.8ZM1336.26 1320.8V1212.9H1337.46V1320.8ZM1337.39 1320.8V1205.68H1338.59V1320.8ZM1338.51 1320.8V1212.9H1339.71V1320.8ZM1339.63 1320.8V1212.9H1340.83V1320.8ZM1340.75 1320.8V1220.12H1341.95V1320.8ZM1341.87 1320.8V1205.68H1343.07V1320.8ZM1342.99 1320.8V1205.68H1344.19V1320.8ZM1344.11 1320.8V1111.82H1345.31V1320.8ZM1345.24 1320.8V1111.82H1346.44V1320.8ZM1346.36 1320.8V1119.04H1347.56V1320.8ZM1347.48 1320.8V1119.04H1348.68V1320.8ZM1348.6 1320.8V1119.04H1349.8V1320.8ZM1349.72 1320.8V1133.48H1350.92V1320.8ZM1350.84 1320.8V1205.68H1352.04V1320.8ZM1351.96 1320.8V1227.34H1353.16V1320.8ZM1528.03 1320.8V1306.76H1529.23V1320.8ZM1529.15 1320.8V1306.76H1530.35V1320.8ZM1530.27 1320.8V1299.54H1531.47V1320.8ZM1531.39 1320.8V1299.54H1532.59V1320.8ZM1532.51 1320.8V1306.76H1533.71V1320.8ZM1533.64 1320.8V1306.76H1534.84V1320.8ZM1534.76 1320.8V1306.76H1535.96V1320.8ZM1535.88 1320.8V1299.54H1537.08V1320.8ZM1537 1320.8V1299.54H1538.2V1320.8ZM1538.12 1320.8V1306.76H1539.32V1320.8ZM1539.24 1320.8V1299.54H1540.44V1320.8ZM1540.36 1320.8V1299.54H1541.56V1320.8ZM1541.49 1320.8V1306.76H1542.69V1320.8ZM1542.61 1320.8V1306.76H1543.81V1320.8ZM1543.73 1320.8V1285.1H1544.93V1320.8ZM1544.85 1320.8V1176.8H1546.05V1320.8ZM1545.97 1320.8V952.98H1547.17V1320.8ZM1547.09 1320.8V945.76H1548.29V1320.8ZM1548.21 1320.8V945.76H1549.41V1320.8ZM1549.34 1320.8V902.44H1550.54V1320.8ZM1550.46 1320.8V902.44H1551.66V1320.8ZM1551.58 1320.8V902.44H1552.78V1320.8ZM1552.7 1320.8V1017.96H1553.9V1320.8ZM1553.82 1320.8V1220.12H1555.02V1320.8ZM1554.94 1320.8V1249H1556.14V1320.8ZM1556.06 1320.8V1082.94H1557.26V1320.8ZM1557.19 1320.8V1082.94H1558.39V1320.8ZM1558.31 1320.8V1191.24H1559.51V1320.8ZM1559.43 1320.8V1263.44H1560.63V1320.8ZM1560.55 1320.8V1061.28H1561.75V1320.8ZM1561.67 1320.8V1061.28H1562.87V1320.8ZM1562.79 1320.8V1256.22H1563.99V1320.8ZM1563.91 1320.8V1277.88H1565.11V1320.8ZM1565.04 1320.8V1277.88H1566.24V1320.8ZM1566.16 1320.8V1285.1H1567.36V1320.8ZM1567.28 1320.8V1285.1H1568.48V1320.8ZM1568.4 1320.8V1292.32H1569.6V1320.8ZM1569.52 1320.8V1220.12H1570.72V1320.8ZM1570.64 1320.8V1220.12H1571.84V1320.8ZM1571.76 1320.8V1119.04H1572.96V1320.8ZM1572.89 1320.8V1119.04H1574.09V1320.8ZM1574.01 1320.8V1285.1H1575.21V1320.8ZM1575.13 1320.8V1285.1H1576.33V1320.8ZM1576.25 1320.8V1270.66H1577.45V1320.8ZM1577.37 1320.8V1176.8H1578.57V1320.8ZM1578.49 1320.8V1270.66H1579.69V1320.8ZM1579.61 1320.8V1270.66H1580.81V1320.8ZM1580.74 1320.8V1256.22H1581.94V1320.8ZM1581.86 1320.8V1241.78H1583.06V1320.8ZM1582.98 1320.8V1155.14H1584.18V1320.8ZM1584.1 1320.8V1155.14H1585.3V1320.8ZM1585.22 1320.8V1155.14H1586.42V1320.8ZM1586.34 1320.8V1010.74H1587.54V1320.8ZM1587.46 1320.8V967.42H1588.66V1320.8ZM1588.59 1320.8V967.42H1589.79V1320.8ZM1589.71 1320.8V1017.96H1590.91V1320.8ZM1590.83 1320.8V1025.18H1592.03V1320.8ZM1591.95 1320.8V1068.5H1593.15V1320.8ZM1593.07 1320.8V1068.5H1594.27V1320.8ZM1594.19 1320.8V1068.5H1595.39V1320.8ZM1595.31 1320.8V1169.58H1596.51V1320.8ZM1596.44 1320.8V1241.78H1597.64V1320.8ZM1597.56 1320.8V1227.34H1598.76V1320.8ZM1598.68 1320.8V1220.12H1599.88V1320.8ZM1599.8 1320.8V1220.12H1601V1320.8ZM1600.92 1320.8V1198.46H1602.12V1320.8ZM1602.04 1320.8V1198.46H1603.24V1320.8ZM1603.16 1320.8V1198.46H1604.36V1320.8ZM1604.29 1320.8V1191.24H1605.49V1320.8ZM1605.41 1320.8V1191.24H1606.61V1320.8ZM1606.53 1320.8V1270.66H1607.73V1320.8ZM1607.65 1320.8V1198.46H1608.85V1320.8ZM1608.77 1320.8V1198.46H1609.97V1320.8ZM1609.89 1320.8V1198.46H1611.09V1320.8ZM1611.01 1320.8V1205.68H1612.21V1320.8ZM1612.14 1320.8V1205.68H1613.34V1320.8ZM1613.26 1320.8V1212.9H1614.46V1320.8ZM1614.38 1320.8V1212.9H1615.58V1320.8ZM1615.5 1320.8V1256.22H1616.7V1320.8ZM1616.62 1320.8V1270.66H1617.82V1320.8ZM1617.74 1320.8V1277.88H1618.94V1320.8ZM1618.86 1320.8V1277.88H1620.06V1320.8ZM1619.99 1320.8V1285.1H1621.19V1320.8ZM1621.11 1320.8V1277.88H1622.31V1320.8ZM1622.23 1320.8V1277.88H1623.43V1320.8ZM1623.35 1320.8V1270.66H1624.55V1320.8ZM1624.47 1320.8V1263.44H1625.67V1320.8ZM1625.59 1320.8V1054.06H1626.79V1320.8ZM1626.71 1320.8V931.32H1627.91V1320.8ZM1627.84 1320.8V931.32H1629.04V1320.8ZM1628.96 1320.8V1054.06H1630.16V1320.8ZM1630.08 1320.8V1104.6H1631.28V1320.8ZM1631.2 1320.8V1104.6H1632.4V1320.8ZM1632.32 1320.8V1104.6H1633.52V1320.8ZM1633.44 1320.8V1039.62H1634.64V1320.8ZM1634.56 1320.8V1039.62H1635.76V1320.8ZM1635.69 1320.8V974.64H1636.89V1320.8ZM1636.81 1320.8V938.54H1638.01V1320.8ZM1637.93 1320.8V938.54H1639.13V1320.8ZM1639.05 1320.8V1234.56H1640.25V1320.8ZM1640.17 1320.8V1220.12H1641.37V1320.8ZM1641.29 1320.8V1220.12H1642.49V1320.8ZM1642.41 1320.8V1212.9H1643.61V1320.8ZM1643.54 1320.8V1212.9H1644.74V1320.8ZM1644.66 1320.8V1212.9H1645.86V1320.8ZM1645.78 1320.8V1234.56H1646.98V1320.8ZM1646.9 1320.8V1212.9H1648.1V1320.8ZM1648.02 1320.8V1270.66H1649.22V1320.8ZM1649.14 1320.8V1277.88H1650.34V1320.8ZM1650.26 1320.8V1277.88H1651.46V1320.8ZM1651.39 1320.8V1227.34H1652.59V1320.8ZM1652.51 1320.8V1227.34H1653.71V1320.8ZM1653.63 1320.8V1256.22H1654.83V1320.8ZM1654.75 1320.8V1270.66H1655.95V1320.8ZM1655.87 1320.8V1270.66H1657.07V1320.8ZM1656.99 1320.8V1241.78H1658.19V1320.8ZM1658.11 1320.8V1176.8H1659.31V1320.8ZM1659.24 1320.8V1176.8H1660.44V1320.8ZM1660.36 1320.8V1176.8H1661.56V1320.8ZM1661.48 1320.8V1140.7H1662.68V1320.8ZM1662.6 1320.8V1205.68H1663.8V1320.8ZM1663.72 1320.8V1205.68H1664.92V1320.8ZM1664.84 1320.8V1234.56H1666.04V1320.8ZM1665.96 1320.8V1234.56H1667.16V1320.8ZM1667.09 1320.8V1249H1668.29V1320.8ZM1668.21 1320.8V1212.9H1669.41V1320.8ZM1669.33 1320.8V1212.9H1670.53V1320.8ZM1670.45 1320.8V1147.92H1671.65V1320.8ZM1671.57 1320.8V1184.02H1672.77V1320.8ZM1672.69 1320.8V1176.8H1673.89V1320.8ZM1673.81 1320.8V1176.8H1675.01V1320.8ZM1674.94 1320.8V1277.88H1676.14V1320.8Z" fill="#259070" stroke="#259070" stroke-opacity="0.55" stroke-width="1.3"/>
<path d="M157 1320.8V1313.98H156.6V1320.8ZM157 1320.8V1313.98H157.72V1320.8ZM157.64 1320.8V1306.76H158.84V1320.8ZM158.76 1320.8V1306.76H159.96V1320.8ZM159.89 1320.8V1313.98H161.09V1320.8ZM161.01 1320.8V1313.98H162.21V1320.8ZM162.13 1320.8V1306.76H163.33V1320.8ZM163.25 1320.8V1313.98H164.45V1320.8ZM164.37 1320.8V1313.98H165.57V1320.8ZM165.49 1320.8V1313.98H166.69V1320.8ZM166.61 1320.8V1313.98H167.81V1320.8ZM167.74 1320.8V1313.98H168.94V1320.8ZM168.86 1320.8V1306.76H170.06V1320.8ZM169.98 1320.8V1306.76H171.18V1320.8ZM171.1 1320.8V1313.98H172.3V1320.8ZM172.22 1320.8V1306.76H173.42V1320.8ZM173.34 1320.8V1306.76H174.54V1320.8ZM174.46 1320.8V1306.76H175.66V1320.8ZM175.59 1320.8V1306.76H176.79V1320.8ZM176.71 1320.8V1306.76H177.91V1320.8ZM177.83 1320.8V1313.98H179.03V1320.8ZM178.95 1320.8V1306.76H180.15V1320.8ZM180.07 1320.8V1306.76H181.27V1320.8ZM181.19 1320.8V1306.76H182.39V1320.8ZM182.31 1320.8V1306.76H183.51V1320.8ZM183.44 1320.8V1313.98H184.64V1320.8ZM184.56 1320.8V1306.76H185.76V1320.8ZM185.68 1320.8V1299.54H186.88V1320.8ZM186.8 1320.8V1299.54H188V1320.8ZM187.92 1320.8V1299.54H189.12V1320.8ZM189.04 1320.8V1299.54H190.24V1320.8ZM190.16 1320.8V1299.54H191.36V1320.8ZM191.29 1320.8V1299.54H192.49V1320.8ZM192.41 1320.8V1306.76H193.61V1320.8ZM193.53 1320.8V1306.76H194.73V1320.8ZM194.65 1320.8V1299.54H195.85V1320.8ZM195.77 1320.8V1299.54H196.97V1320.8ZM196.89 1320.8V1306.76H198.09V1320.8ZM198.01 1320.8V1306.76H199.21V1320.8ZM199.14 1320.8V1306.76H200.34V1320.8ZM200.26 1320.8V1299.54H201.46V1320.8ZM201.38 1320.8V1299.54H202.58V1320.8ZM202.5 1320.8V1306.76H203.7V1320.8ZM203.62 1320.8V1306.76H204.82V1320.8ZM204.74 1320.8V1306.76H205.94V1320.8ZM205.86 1320.8V1306.76H207.06V1320.8ZM206.99 1320.8V1306.76H208.19V1320.8ZM208.11 1320.8V1306.76H209.31V1320.8ZM209.23 1320.8V1306.76H210.43V1320.8ZM210.35 1320.8V1306.76H211.55V1320.8ZM211.47 1320.8V1306.76H212.67V1320.8ZM212.59 1320.8V1306.76H213.79V1320.8ZM213.71 1320.8V1306.76H214.91V1320.8ZM214.84 1320.8V1292.32H216.04V1320.8ZM215.96 1320.8V1292.32H217.16V1320.8ZM217.08 1320.8V1299.54H218.28V1320.8ZM218.2 1320.8V1299.54H219.4V1320.8ZM219.32 1320.8V1299.54H220.52V1320.8ZM220.44 1320.8V1299.54H221.64V1320.8ZM221.56 1320.8V1299.54H222.76V1320.8ZM222.69 1320.8V1299.54H223.89V1320.8ZM223.81 1320.8V1292.32H225.01V1320.8ZM224.93 1320.8V1299.54H226.13V1320.8ZM226.05 1320.8V1299.54H227.25V1320.8ZM227.17 1320.8V1292.32H228.37V1320.8ZM228.29 1320.8V1292.32H229.49V1320.8ZM229.41 1320.8V1299.54H230.61V1320.8ZM230.54 1320.8V1299.54H231.74V1320.8ZM231.66 1320.8V1292.32H232.86V1320.8ZM232.78 1320.8V1292.32H233.98V1320.8ZM233.9 1320.8V1292.32H235.1V1320.8ZM235.02 1320.8V1292.32H236.22V1320.8ZM384.17 1320.8V1313.98H385.37V1320.8ZM385.29 1320.8V1313.98H386.49V1320.8ZM386.41 1320.8V1313.98H387.61V1320.8ZM387.54 1320.8V1313.98H388.74V1320.8ZM388.66 1320.8V1313.98H389.86V1320.8ZM389.78 1320.8V1313.98H390.98V1320.8ZM390.9 1320.8V1313.98H392.1V1320.8ZM392.02 1320.8V1306.76H393.22V1320.8ZM393.14 1320.8V1313.98H394.34V1320.8ZM394.26 1320.8V1313.98H395.46V1320.8ZM395.39 1320.8V1313.98H396.59V1320.8ZM396.51 1320.8V1313.98H397.71V1320.8ZM397.63 1320.8V1306.76H398.83V1320.8ZM398.75 1320.8V1306.76H399.95V1320.8ZM399.87 1320.8V1306.76H401.07V1320.8ZM400.99 1320.8V1306.76H402.19V1320.8ZM402.11 1320.8V1306.76H403.31V1320.8ZM403.24 1320.8V1306.76H404.44V1320.8ZM404.36 1320.8V1306.76H405.56V1320.8ZM405.48 1320.8V1306.76H406.68V1320.8ZM406.6 1320.8V1306.76H407.8V1320.8ZM407.72 1320.8V1306.76H408.92V1320.8ZM408.84 1320.8V1306.76H410.04V1320.8ZM409.96 1320.8V1306.76H411.16V1320.8ZM411.09 1320.8V1306.76H412.29V1320.8ZM412.21 1320.8V1306.76H413.41V1320.8ZM413.33 1320.8V1306.76H414.53V1320.8ZM414.45 1320.8V1306.76H415.65V1320.8ZM415.57 1320.8V1306.76H416.77V1320.8ZM416.69 1320.8V1306.76H417.89V1320.8ZM417.81 1320.8V1306.76H419.01V1320.8ZM418.94 1320.8V1306.76H420.14V1320.8ZM420.06 1320.8V1306.76H421.26V1320.8ZM421.18 1320.8V1306.76H422.38V1320.8ZM422.3 1320.8V1306.76H423.5V1320.8ZM423.42 1320.8V1306.76H424.62V1320.8ZM424.54 1320.8V1306.76H425.74V1320.8ZM425.66 1320.8V1306.76H426.86V1320.8ZM426.79 1320.8V1306.76H427.99V1320.8ZM427.91 1320.8V1306.76H429.11V1320.8ZM429.03 1320.8V1306.76H430.23V1320.8ZM430.15 1320.8V1306.76H431.35V1320.8ZM431.27 1320.8V1306.76H432.47V1320.8ZM432.39 1320.8V1299.54H433.59V1320.8ZM433.51 1320.8V1299.54H434.71V1320.8ZM434.64 1320.8V1306.76H435.84V1320.8ZM435.76 1320.8V1306.76H436.96V1320.8ZM436.88 1320.8V1313.98H438.08V1320.8ZM438 1320.8V1313.98H439.2V1320.8ZM439.12 1320.8V1313.98H440.32V1320.8ZM440.24 1320.8V1313.98H441.44V1320.8ZM441.36 1320.8V1313.98H442.56V1320.8ZM442.49 1320.8V1313.98H443.69V1320.8ZM443.61 1320.8V1313.98H444.81V1320.8ZM444.73 1320.8V1313.98H445.93V1320.8ZM445.85 1320.8V1313.98H447.05V1320.8ZM446.97 1320.8V1313.98H448.17V1320.8ZM448.09 1320.8V1313.98H449.29V1320.8ZM449.21 1320.8V1313.98H450.41V1320.8ZM450.34 1320.8V1313.98H451.54V1320.8ZM451.46 1320.8V1313.98H452.66V1320.8ZM452.58 1320.8V1313.98H453.78V1320.8ZM453.7 1320.8V1313.98H454.9V1320.8ZM454.82 1320.8V1313.98H456.02V1320.8ZM455.94 1320.8V1313.98H457.14V1320.8ZM457.06 1320.8V1313.98H458.26V1320.8ZM458.19 1320.8V1313.98H459.39V1320.8ZM459.31 1320.8V1313.98H460.51V1320.8ZM460.43 1320.8V1313.98H461.63V1320.8ZM461.55 1320.8V1313.98H462.75V1320.8ZM462.67 1320.8V1313.98H463.87V1320.8ZM463.79 1320.8V1313.98H464.99V1320.8ZM464.91 1320.8V1313.98H466.11V1320.8ZM466.04 1320.8V1313.98H467.24V1320.8ZM467.16 1320.8V1313.98H468.36V1320.8ZM468.28 1320.8V1313.98H469.48V1320.8ZM469.4 1320.8V1313.98H470.6V1320.8ZM470.52 1320.8V1313.98H471.72V1320.8ZM471.64 1320.8V1313.98H472.84V1320.8ZM472.76 1320.8V1313.98H473.96V1320.8ZM473.89 1320.8V1313.98H475.09V1320.8ZM475.01 1320.8V1313.98H476.21V1320.8ZM476.13 1320.8V1313.98H477.33V1320.8ZM477.25 1320.8V1313.98H478.45V1320.8ZM478.37 1320.8V1313.98H479.57V1320.8ZM479.49 1320.8V1313.98H480.69V1320.8ZM480.61 1320.8V1313.98H481.81V1320.8ZM481.74 1320.8V1313.98H482.94V1320.8ZM482.86 1320.8V1313.98H484.06V1320.8ZM483.98 1320.8V1313.98H485.18V1320.8ZM485.1 1320.8V1313.98H486.3V1320.8ZM486.22 1320.8V1313.98H487.42V1320.8ZM487.34 1320.8V1313.98H488.54V1320.8ZM488.46 1320.8V1313.98H489.66V1320.8ZM489.59 1320.8V1313.98H490.79V1320.8ZM490.71 1320.8V1313.98H491.91V1320.8ZM491.83 1320.8V1313.98H493.03V1320.8ZM492.95 1320.8V1313.98H494.15V1320.8ZM494.07 1320.8V1299.54H495.27V1320.8ZM495.19 1320.8V1299.54H496.39V1320.8ZM496.31 1320.8V1306.76H497.51V1320.8ZM497.44 1320.8V1306.76H498.64V1320.8ZM498.56 1320.8V1299.54H499.76V1320.8ZM499.68 1320.8V1299.54H500.88V1320.8ZM500.8 1320.8V1313.98H502V1320.8ZM501.92 1320.8V1313.98H503.12V1320.8ZM503.04 1320.8V1313.98H504.24V1320.8ZM504.16 1320.8V1306.76H505.36V1320.8ZM505.29 1320.8V1306.76H506.49V1320.8ZM506.41 1320.8V1313.98H507.61V1320.8ZM507.53 1320.8V1313.98H508.73V1320.8ZM508.65 1320.8V1313.98H509.85V1320.8ZM509.77 1320.8V1313.98H510.97V1320.8ZM510.89 1320.8V1313.98H512.09V1320.8ZM512.01 1320.8V1313.98H513.21V1320.8ZM513.14 1320.8V1313.98H514.34V1320.8ZM514.26 1320.8V1313.98H515.46V1320.8ZM515.38 1320.8V1313.98H516.58V1320.8ZM516.5 1320.8V1313.98H517.7V1320.8ZM517.62 1320.8V1313.98H518.82V1320.8ZM518.74 1320.8V1313.98H519.94V1320.8ZM519.86 1320.8V1313.98H521.06V1320.8ZM520.99 1320.8V1313.98H522.19V1320.8ZM522.11 1320.8V1313.98H523.31V1320.8ZM523.23 1320.8V1313.98H524.43V1320.8ZM524.35 1320.8V1313.98H525.55V1320.8ZM525.47 1320.8V1313.98H526.67V1320.8ZM526.59 1320.8V1313.98H527.79V1320.8ZM527.71 1320.8V1306.76H528.91V1320.8ZM528.84 1320.8V1313.98H530.04V1320.8ZM529.96 1320.8V1313.98H531.16V1320.8ZM531.08 1320.8V1313.98H532.28V1320.8ZM532.2 1320.8V1313.98H533.4V1320.8ZM533.32 1320.8V1313.98H534.52V1320.8ZM534.44 1320.8V1313.98H535.64V1320.8ZM535.56 1320.8V1306.76H536.76V1320.8ZM536.69 1320.8V1306.76H537.89V1320.8ZM537.81 1320.8V1306.76H539.01V1320.8ZM538.93 1320.8V1306.76H540.13V1320.8ZM540.05 1320.8V1299.54H541.25V1320.8ZM541.17 1320.8V1299.54H542.37V1320.8ZM542.29 1320.8V1299.54H543.49V1320.8ZM543.41 1320.8V1299.54H544.61V1320.8ZM544.54 1320.8V1306.76H545.74V1320.8ZM545.66 1320.8V1306.76H546.86V1320.8ZM546.78 1320.8V1299.54H547.98V1320.8ZM547.9 1320.8V1306.76H549.1V1320.8ZM549.02 1320.8V1306.76H550.22V1320.8ZM550.14 1320.8V1306.76H551.34V1320.8ZM551.26 1320.8V1299.54H552.46V1320.8ZM552.39 1320.8V1299.54H553.59V1320.8ZM553.51 1320.8V1299.54H554.71V1320.8ZM554.63 1320.8V1306.76H555.83V1320.8ZM555.75 1320.8V1306.76H556.95V1320.8ZM556.87 1320.8V1306.76H558.07V1320.8ZM557.99 1320.8V1306.76H559.19V1320.8ZM707.14 1320.8V1212.9H708.34V1320.8ZM708.26 1320.8V1212.9H709.46V1320.8ZM709.39 1320.8V1212.9H710.59V1320.8ZM710.51 1320.8V1198.46H711.71V1320.8ZM711.63 1320.8V1198.46H712.83V1320.8ZM712.75 1320.8V1198.46H713.95V1320.8ZM713.87 1320.8V1212.9H715.07V1320.8ZM714.99 1320.8V1212.9H716.19V1320.8ZM716.11 1320.8V1176.8H717.31V1320.8ZM717.24 1320.8V1176.8H718.44V1320.8ZM718.36 1320.8V1256.22H719.56V1320.8ZM719.48 1320.8V1256.22H720.68V1320.8ZM720.6 1320.8V1285.1H721.8V1320.8ZM721.72 1320.8V1306.76H722.92V1320.8ZM722.84 1320.8V1306.76H724.04V1320.8ZM723.96 1320.8V1299.54H725.16V1320.8ZM725.09 1320.8V1299.54H726.29V1320.8ZM726.21 1320.8V1306.76H727.41V1320.8ZM727.33 1320.8V1306.76H728.53V1320.8ZM728.45 1320.8V1306.76H729.65V1320.8ZM729.57 1320.8V1306.76H730.77V1320.8ZM730.69 1320.8V1299.54H731.89V1320.8ZM731.81 1320.8V1306.76H733.01V1320.8ZM732.94 1320.8V1306.76H734.14V1320.8ZM734.06 1320.8V1306.76H735.26V1320.8ZM735.18 1320.8V1306.76H736.38V1320.8ZM736.3 1320.8V1306.76H737.5V1320.8ZM737.42 1320.8V1306.76H738.62V1320.8ZM738.54 1320.8V1299.54H739.74V1320.8ZM739.66 1320.8V1299.54H740.86V1320.8ZM740.79 1320.8V1306.76H741.99V1320.8ZM741.91 1320.8V1306.76H743.11V1320.8ZM743.03 1320.8V1306.76H744.23V1320.8ZM744.15 1320.8V1306.76H745.35V1320.8ZM745.27 1320.8V1306.76H746.47V1320.8ZM746.39 1320.8V1306.76H747.59V1320.8ZM747.51 1320.8V1306.76H748.71V1320.8ZM748.64 1320.8V1306.76H749.84V1320.8ZM749.76 1320.8V1306.76H750.96V1320.8ZM750.88 1320.8V1306.76H752.08V1320.8ZM752 1320.8V1306.76H753.2V1320.8ZM753.12 1320.8V1306.76H754.32V1320.8ZM754.24 1320.8V1306.76H755.44V1320.8ZM755.36 1320.8V1306.76H756.56V1320.8ZM756.49 1320.8V1306.76H757.69V1320.8ZM757.61 1320.8V1306.76H758.81V1320.8ZM758.73 1320.8V1306.76H759.93V1320.8ZM759.85 1320.8V1306.76H761.05V1320.8ZM760.97 1320.8V1313.98H762.17V1320.8ZM762.09 1320.8V1313.98H763.29V1320.8ZM763.21 1320.8V1313.98H764.41V1320.8ZM764.34 1320.8V1313.98H765.54V1320.8ZM765.46 1320.8V1313.98H766.66V1320.8ZM766.58 1320.8V1313.98H767.78V1320.8ZM767.7 1320.8V1313.98H768.9V1320.8ZM768.82 1320.8V1313.98H770.02V1320.8ZM769.94 1320.8V1313.98H771.14V1320.8ZM771.06 1320.8V1313.98H772.26V1320.8ZM772.19 1320.8V1313.98H773.39V1320.8ZM773.31 1320.8V1313.98H774.51V1320.8ZM774.43 1320.8V1313.98H775.63V1320.8ZM775.55 1320.8V1313.98H776.75V1320.8ZM776.67 1320.8V1313.98H777.87V1320.8ZM777.79 1320.8V1313.98H778.99V1320.8ZM778.91 1320.8V1313.98H780.11V1320.8ZM780.04 1320.8V1313.98H781.24V1320.8ZM781.16 1320.8V1313.98H782.36V1320.8ZM782.28 1320.8V1313.98H783.48V1320.8ZM783.4 1320.8V1313.98H784.6V1320.8ZM784.52 1320.8V1313.98H785.72V1320.8ZM785.64 1320.8V1313.98H786.84V1320.8ZM786.76 1320.8V1313.98H787.96V1320.8ZM787.89 1320.8V1313.98H789.09V1320.8ZM789.01 1320.8V1313.98H790.21V1320.8ZM790.13 1320.8V1313.98H791.33V1320.8ZM791.25 1320.8V1313.98H792.45V1320.8ZM792.37 1320.8V1313.98H793.57V1320.8ZM793.49 1320.8V1313.98H794.69V1320.8ZM794.61 1320.8V1313.98H795.81V1320.8ZM795.74 1320.8V1306.76H796.94V1320.8ZM796.86 1320.8V1306.76H798.06V1320.8ZM797.98 1320.8V1306.76H799.18V1320.8ZM799.1 1320.8V1306.76H800.3V1320.8ZM800.22 1320.8V1306.76H801.42V1320.8ZM801.34 1320.8V1313.98H802.54V1320.8ZM802.46 1320.8V1313.98H803.66V1320.8ZM803.59 1320.8V1313.98H804.79V1320.8ZM804.71 1320.8V1313.98H805.91V1320.8ZM805.83 1320.8V1313.98H807.03V1320.8ZM806.95 1320.8V1313.98H808.15V1320.8ZM808.07 1320.8V1313.98H809.27V1320.8ZM809.19 1320.8V1313.98H810.39V1320.8ZM810.31 1320.8V1313.98H811.51V1320.8ZM811.44 1320.8V1313.98H812.64V1320.8ZM812.56 1320.8V1313.98H813.76V1320.8ZM813.68 1320.8V1313.98H814.88V1320.8ZM814.8 1320.8V1313.98H816V1320.8ZM815.92 1320.8V1313.98H817.12V1320.8ZM817.04 1320.8V1313.98H818.24V1320.8ZM818.16 1320.8V1313.98H819.36V1320.8ZM819.29 1320.8V1313.98H820.49V1320.8ZM820.41 1320.8V1313.98H821.61V1320.8ZM821.53 1320.8V1313.98H822.73V1320.8ZM822.65 1320.8V1313.98H823.85V1320.8ZM823.77 1320.8V1313.98H824.97V1320.8ZM824.89 1320.8V1313.98H826.09V1320.8ZM826.01 1320.8V1313.98H827.21V1320.8ZM827.14 1320.8V1313.98H828.34V1320.8ZM828.26 1320.8V1313.98H829.46V1320.8ZM829.38 1320.8V1313.98H830.58V1320.8ZM830.5 1320.8V1313.98H831.7V1320.8ZM831.62 1320.8V1313.98H832.82V1320.8ZM832.74 1320.8V1313.98H833.94V1320.8ZM833.86 1320.8V1313.98H835.06V1320.8ZM834.99 1320.8V1313.98H836.19V1320.8ZM836.11 1320.8V1313.98H837.31V1320.8ZM837.23 1320.8V1313.98H838.43V1320.8ZM838.35 1320.8V1313.98H839.55V1320.8ZM839.47 1320.8V1313.98H840.67V1320.8ZM840.59 1320.8V1313.98H841.79V1320.8ZM841.71 1320.8V1313.98H842.91V1320.8ZM842.84 1320.8V1313.98H844.04V1320.8ZM843.96 1320.8V1313.98H845.16V1320.8ZM845.08 1320.8V1313.98H846.28V1320.8ZM846.2 1320.8V1313.98H847.4V1320.8ZM847.32 1320.8V1313.98H848.52V1320.8ZM848.44 1320.8V1313.98H849.64V1320.8ZM849.56 1320.8V1313.98H850.76V1320.8ZM850.69 1320.8V1313.98H851.89V1320.8ZM851.81 1320.8V1313.98H853.01V1320.8ZM852.93 1320.8V1313.98H854.13V1320.8ZM854.05 1320.8V1306.76H855.25V1320.8ZM855.17 1320.8V1313.98H856.37V1320.8ZM856.29 1320.8V1313.98H857.49V1320.8ZM857.41 1320.8V1313.98H858.61V1320.8ZM858.54 1320.8V1313.98H859.74V1320.8ZM859.66 1320.8V1313.98H860.86V1320.8ZM860.78 1320.8V1299.54H861.98V1320.8ZM861.9 1320.8V1299.54H863.1V1320.8ZM863.02 1320.8V1306.76H864.22V1320.8ZM864.14 1320.8V1306.76H865.34V1320.8ZM865.26 1320.8V1306.76H866.46V1320.8ZM866.39 1320.8V1299.54H867.59V1320.8ZM867.51 1320.8V1299.54H868.71V1320.8ZM868.63 1320.8V1306.76H869.83V1320.8ZM869.75 1320.8V1306.76H870.95V1320.8ZM870.87 1320.8V1299.54H872.07V1320.8ZM871.99 1320.8V1299.54H873.19V1320.8ZM873.11 1320.8V1306.76H874.31V1320.8ZM874.24 1320.8V1299.54H875.44V1320.8ZM875.36 1320.8V1299.54H876.56V1320.8ZM876.48 1320.8V1299.54H877.68V1320.8ZM877.6 1320.8V1299.54H878.8V1320.8ZM878.72 1320.8V1299.54H879.92V1320.8ZM879.84 1320.8V1299.54H881.04V1320.8ZM880.96 1320.8V1299.54H882.16V1320.8ZM1030.11 1320.8V1292.32H1031.31V1320.8ZM1031.24 1320.8V1292.32H1032.44V1320.8ZM1032.36 1320.8V1277.88H1033.56V1320.8ZM1033.48 1320.8V1277.88H1034.68V1320.8ZM1034.6 1320.8V1292.32H1035.8V1320.8ZM1035.72 1320.8V1292.32H1036.92V1320.8ZM1036.84 1320.8V1306.76H1038.04V1320.8ZM1037.96 1320.8V1313.98H1039.16V1320.8ZM1039.09 1320.8V1313.98H1040.29V1320.8ZM1040.21 1320.8V1313.98H1041.41V1320.8ZM1041.33 1320.8V1306.76H1042.53V1320.8ZM1042.45 1320.8V1306.76H1043.65V1320.8ZM1043.57 1320.8V1306.76H1044.77V1320.8ZM1044.69 1320.8V1306.76H1045.89V1320.8ZM1045.81 1320.8V1306.76H1047.01V1320.8ZM1046.94 1320.8V1306.76H1048.14V1320.8ZM1048.06 1320.8V1299.54H1049.26V1320.8ZM1049.18 1320.8V1299.54H1050.38V1320.8ZM1050.3 1320.8V1299.54H1051.5V1320.8ZM1051.42 1320.8V1299.54H1052.62V1320.8ZM1052.54 1320.8V1299.54H1053.74V1320.8ZM1053.66 1320.8V1299.54H1054.86V1320.8ZM1054.79 1320.8V1306.76H1055.99V1320.8ZM1055.91 1320.8V1306.76H1057.11V1320.8ZM1057.03 1320.8V1306.76H1058.23V1320.8ZM1058.15 1320.8V1306.76H1059.35V1320.8ZM1059.27 1320.8V1306.76H1060.47V1320.8ZM1060.39 1320.8V1306.76H1061.59V1320.8ZM1061.51 1320.8V1306.76H1062.71V1320.8ZM1062.64 1320.8V1306.76H1063.84V1320.8ZM1063.76 1320.8V1306.76H1064.96V1320.8ZM1064.88 1320.8V1306.76H1066.08V1320.8ZM1066 1320.8V1306.76H1067.2V1320.8ZM1067.12 1320.8V1306.76H1068.32V1320.8ZM1068.24 1320.8V1306.76H1069.44V1320.8ZM1069.36 1320.8V1306.76H1070.56V1320.8ZM1070.49 1320.8V1306.76H1071.69V1320.8ZM1071.61 1320.8V1306.76H1072.81V1320.8ZM1072.73 1320.8V1306.76H1073.93V1320.8ZM1073.85 1320.8V1306.76H1075.05V1320.8ZM1074.97 1320.8V1306.76H1076.17V1320.8ZM1076.09 1320.8V1306.76H1077.29V1320.8ZM1077.21 1320.8V1306.76H1078.41V1320.8ZM1078.34 1320.8V1306.76H1079.54V1320.8ZM1079.46 1320.8V1306.76H1080.66V1320.8ZM1080.58 1320.8V1306.76H1081.78V1320.8ZM1081.7 1320.8V1306.76H1082.9V1320.8ZM1082.82 1320.8V1313.98H1084.02V1320.8ZM1083.94 1320.8V1313.98H1085.14V1320.8ZM1085.06 1320.8V1313.98H1086.26V1320.8ZM1086.19 1320.8V1313.98H1087.39V1320.8ZM1087.31 1320.8V1313.98H1088.51V1320.8ZM1088.43 1320.8V1313.98H1089.63V1320.8ZM1089.55 1320.8V1313.98H1090.75V1320.8ZM1090.67 1320.8V1313.98H1091.87V1320.8ZM1091.79 1320.8V1313.98H1092.99V1320.8ZM1092.91 1320.8V1313.98H1094.11V1320.8ZM1094.04 1320.8V1313.98H1095.24V1320.8ZM1095.16 1320.8V1313.98H1096.36V1320.8ZM1096.28 1320.8V1313.98H1097.48V1320.8ZM1097.4 1320.8V1313.98H1098.6V1320.8ZM1098.52 1320.8V1313.98H1099.72V1320.8ZM1099.64 1320.8V1313.98H1100.84V1320.8ZM1100.76 1320.8V1313.98H1101.96V1320.8ZM1101.89 1320.8V1313.98H1103.09V1320.8ZM1103.01 1320.8V1313.98H1104.21V1320.8ZM1104.13 1320.8V1313.98H1105.33V1320.8ZM1105.25 1320.8V1313.98H1106.45V1320.8ZM1106.37 1320.8V1306.76H1107.57V1320.8ZM1107.49 1320.8V1306.76H1108.69V1320.8ZM1108.61 1320.8V1306.76H1109.81V1320.8ZM1109.74 1320.8V1306.76H1110.94V1320.8ZM1110.86 1320.8V1306.76H1112.06V1320.8ZM1111.98 1320.8V1313.98H1113.18V1320.8ZM1113.1 1320.8V1313.98H1114.3V1320.8ZM1114.22 1320.8V1313.98H1115.42V1320.8ZM1115.34 1320.8V1313.98H1116.54V1320.8ZM1116.46 1320.8V1313.98H1117.66V1320.8ZM1117.59 1320.8V1313.98H1118.79V1320.8ZM1118.71 1320.8V1313.98H1119.91V1320.8ZM1119.83 1320.8V1313.98H1121.03V1320.8ZM1120.95 1320.8V1313.98H1122.15V1320.8ZM1122.07 1320.8V1313.98H1123.27V1320.8ZM1123.19 1320.8V1313.98H1124.39V1320.8ZM1124.31 1320.8V1313.98H1125.51V1320.8ZM1125.44 1320.8V1313.98H1126.64V1320.8ZM1126.56 1320.8V1313.98H1127.76V1320.8ZM1127.68 1320.8V1313.98H1128.88V1320.8ZM1128.8 1320.8V1313.98H1130V1320.8ZM1129.92 1320.8V1313.98H1131.12V1320.8ZM1131.04 1320.8V1313.98H1132.24V1320.8ZM1132.16 1320.8V1313.98H1133.36V1320.8ZM1133.29 1320.8V1313.98H1134.49V1320.8ZM1134.41 1320.8V1313.98H1135.61V1320.8ZM1135.53 1320.8V1313.98H1136.73V1320.8ZM1136.65 1320.8V1313.98H1137.85V1320.8ZM1137.77 1320.8V1313.98H1138.97V1320.8ZM1138.89 1320.8V1313.98H1140.09V1320.8ZM1140.01 1320.8V1313.98H1141.21V1320.8ZM1141.14 1320.8V1313.98H1142.34V1320.8ZM1142.26 1320.8V1313.98H1143.46V1320.8ZM1143.38 1320.8V1313.98H1144.58V1320.8ZM1144.5 1320.8V1313.98H1145.7V1320.8ZM1145.62 1320.8V1313.98H1146.82V1320.8ZM1146.74 1320.8V1313.98H1147.94V1320.8ZM1147.86 1320.8V1313.98H1149.06V1320.8ZM1148.99 1320.8V1313.98H1150.19V1320.8ZM1150.11 1320.8V1313.98H1151.31V1320.8ZM1151.23 1320.8V1313.98H1152.43V1320.8ZM1152.35 1320.8V1313.98H1153.55V1320.8ZM1153.47 1320.8V1313.98H1154.67V1320.8ZM1154.59 1320.8V1313.98H1155.79V1320.8ZM1155.71 1320.8V1313.98H1156.91V1320.8ZM1156.84 1320.8V1313.98H1158.04V1320.8ZM1157.96 1320.8V1313.98H1159.16V1320.8ZM1159.08 1320.8V1313.98H1160.28V1320.8ZM1160.2 1320.8V1313.98H1161.4V1320.8ZM1161.32 1320.8V1313.98H1162.52V1320.8ZM1162.44 1320.8V1313.98H1163.64V1320.8ZM1163.56 1320.8V1313.98H1164.76V1320.8ZM1164.69 1320.8V1313.98H1165.89V1320.8ZM1165.81 1320.8V1313.98H1167.01V1320.8ZM1166.93 1320.8V1313.98H1168.13V1320.8ZM1168.05 1320.8V1313.98H1169.25V1320.8ZM1169.17 1320.8V1313.98H1170.37V1320.8ZM1170.29 1320.8V1313.98H1171.49V1320.8ZM1171.41 1320.8V1313.98H1172.61V1320.8ZM1172.54 1320.8V1313.98H1173.74V1320.8ZM1173.66 1320.8V1313.98H1174.86V1320.8ZM1174.78 1320.8V1313.98H1175.98V1320.8ZM1175.9 1320.8V1313.98H1177.1V1320.8ZM1177.02 1320.8V1313.98H1178.22V1320.8ZM1178.14 1320.8V1313.98H1179.34V1320.8ZM1179.26 1320.8V1313.98H1180.46V1320.8ZM1180.39 1320.8V1313.98H1181.59V1320.8ZM1181.51 1320.8V1313.98H1182.71V1320.8ZM1182.63 1320.8V1313.98H1183.83V1320.8ZM1183.75 1320.8V1306.76H1184.95V1320.8ZM1184.87 1320.8V1306.76H1186.07V1320.8ZM1185.99 1320.8V1306.76H1187.19V1320.8ZM1187.11 1320.8V1306.76H1188.31V1320.8ZM1188.24 1320.8V1306.76H1189.44V1320.8ZM1189.36 1320.8V1299.54H1190.56V1320.8ZM1190.48 1320.8V1299.54H1191.68V1320.8ZM1191.6 1320.8V1306.76H1192.8V1320.8ZM1192.72 1320.8V1306.76H1193.92V1320.8ZM1193.84 1320.8V1306.76H1195.04V1320.8ZM1194.96 1320.8V1306.76H1196.16V1320.8ZM1196.09 1320.8V1299.54H1197.29V1320.8ZM1197.21 1320.8V1299.54H1198.41V1320.8ZM1198.33 1320.8V1306.76H1199.53V1320.8ZM1199.45 1320.8V1299.54H1200.65V1320.8ZM1200.57 1320.8V1299.54H1201.77V1320.8ZM1201.69 1320.8V1299.54H1202.89V1320.8ZM1202.81 1320.8V1299.54H1204.01V1320.8ZM1203.94 1320.8V1299.54H1205.14V1320.8ZM1353.09 1320.8V1227.34H1354.29V1320.8ZM1354.21 1320.8V1227.34H1355.41V1320.8ZM1355.33 1320.8V1241.78H1356.53V1320.8ZM1356.45 1320.8V1241.78H1357.65V1320.8ZM1357.57 1320.8V1241.78H1358.77V1320.8ZM1358.69 1320.8V1241.78H1359.89V1320.8ZM1359.81 1320.8V1234.56H1361.01V1320.8ZM1360.94 1320.8V1220.12H1362.14V1320.8ZM1362.06 1320.8V1220.12H1363.26V1320.8ZM1363.18 1320.8V1234.56H1364.38V1320.8ZM1364.3 1320.8V1169.58H1365.5V1320.8ZM1365.42 1320.8V1169.58H1366.62V1320.8ZM1366.54 1320.8V1227.34H1367.74V1320.8ZM1367.66 1320.8V1277.88H1368.86V1320.8ZM1368.79 1320.8V1277.88H1369.99V1320.8ZM1369.91 1320.8V1285.1H1371.11V1320.8ZM1371.03 1320.8V1285.1H1372.23V1320.8ZM1372.15 1320.8V1306.76H1373.35V1320.8ZM1373.27 1320.8V1306.76H1374.47V1320.8ZM1374.39 1320.8V1306.76H1375.59V1320.8ZM1375.51 1320.8V1306.76H1376.71V1320.8ZM1376.64 1320.8V1306.76H1377.84V1320.8ZM1377.76 1320.8V1306.76H1378.96V1320.8ZM1378.88 1320.8V1306.76H1380.08V1320.8ZM1380 1320.8V1306.76H1381.2V1320.8ZM1381.12 1320.8V1306.76H1382.32V1320.8ZM1382.24 1320.8V1306.76H1383.44V1320.8ZM1383.36 1320.8V1306.76H1384.56V1320.8ZM1384.49 1320.8V1306.76H1385.69V1320.8ZM1385.61 1320.8V1306.76H1386.81V1320.8ZM1386.73 1320.8V1306.76H1387.93V1320.8ZM1387.85 1320.8V1306.76H1389.05V1320.8ZM1388.97 1320.8V1306.76H1390.17V1320.8ZM1390.09 1320.8V1306.76H1391.29V1320.8ZM1391.21 1320.8V1306.76H1392.41V1320.8ZM1392.34 1320.8V1306.76H1393.54V1320.8ZM1393.46 1320.8V1306.76H1394.66V1320.8ZM1394.58 1320.8V1306.76H1395.78V1320.8ZM1395.7 1320.8V1306.76H1396.9V1320.8ZM1396.82 1320.8V1306.76H1398.02V1320.8ZM1397.94 1320.8V1306.76H1399.14V1320.8ZM1399.06 1320.8V1306.76H1400.26V1320.8ZM1400.19 1320.8V1306.76H1401.39V1320.8ZM1401.31 1320.8V1306.76H1402.51V1320.8ZM1402.43 1320.8V1306.76H1403.63V1320.8ZM1403.55 1320.8V1306.76H1404.75V1320.8ZM1404.67 1320.8V1306.76H1405.87V1320.8ZM1405.79 1320.8V1313.98H1406.99V1320.8ZM1406.91 1320.8V1313.98H1408.11V1320.8ZM1408.04 1320.8V1313.98H1409.24V1320.8ZM1409.16 1320.8V1313.98H1410.36V1320.8ZM1410.28 1320.8V1313.98H1411.48V1320.8ZM1411.4 1320.8V1313.98H1412.6V1320.8ZM1412.52 1320.8V1313.98H1413.72V1320.8ZM1413.64 1320.8V1313.98H1414.84V1320.8ZM1414.76 1320.8V1313.98H1415.96V1320.8ZM1415.89 1320.8V1313.98H1417.09V1320.8ZM1417.01 1320.8V1313.98H1418.21V1320.8ZM1418.13 1320.8V1306.76H1419.33V1320.8ZM1419.25 1320.8V1299.54H1420.45V1320.8ZM1420.37 1320.8V1299.54H1421.57V1320.8ZM1421.49 1320.8V1306.76H1422.69V1320.8ZM1422.61 1320.8V1306.76H1423.81V1320.8ZM1423.74 1320.8V1313.98H1424.94V1320.8ZM1424.86 1320.8V1313.98H1426.06V1320.8ZM1425.98 1320.8V1313.98H1427.18V1320.8ZM1427.1 1320.8V1313.98H1428.3V1320.8ZM1428.22 1320.8V1313.98H1429.42V1320.8ZM1429.34 1320.8V1313.98H1430.54V1320.8ZM1430.46 1320.8V1313.98H1431.66V1320.8ZM1431.59 1320.8V1313.98H1432.79V1320.8ZM1432.71 1320.8V1313.98H1433.91V1320.8ZM1433.83 1320.8V1313.98H1435.03V1320.8ZM1434.95 1320.8V1313.98H1436.15V1320.8ZM1436.07 1320.8V1313.98H1437.27V1320.8ZM1437.19 1320.8V1313.98H1438.39V1320.8ZM1438.31 1320.8V1313.98H1439.51V1320.8ZM1439.44 1320.8V1313.98H1440.64V1320.8ZM1440.56 1320.8V1313.98H1441.76V1320.8ZM1441.68 1320.8V1313.98H1442.88V1320.8ZM1442.8 1320.8V1313.98H1444V1320.8ZM1443.92 1320.8V1313.98H1445.12V1320.8ZM1445.04 1320.8V1313.98H1446.24V1320.8ZM1446.16 1320.8V1313.98H1447.36V1320.8ZM1447.29 1320.8V1313.98H1448.49V1320.8ZM1448.41 1320.8V1313.98H1449.61V1320.8ZM1449.53 1320.8V1313.98H1450.73V1320.8ZM1450.65 1320.8V1313.98H1451.85V1320.8ZM1451.77 1320.8V1313.98H1452.97V1320.8ZM1452.89 1320.8V1313.98H1454.09V1320.8ZM1454.01 1320.8V1313.98H1455.21V1320.8ZM1455.14 1320.8V1313.98H1456.34V1320.8ZM1456.26 1320.8V1313.98H1457.46V1320.8ZM1457.38 1320.8V1313.98H1458.58V1320.8ZM1458.5 1320.8V1313.98H1459.7V1320.8ZM1459.62 1320.8V1313.98H1460.82V1320.8ZM1460.74 1320.8V1313.98H1461.94V1320.8ZM1461.86 1320.8V1313.98H1463.06V1320.8ZM1462.99 1320.8V1313.98H1464.19V1320.8ZM1464.11 1320.8V1313.98H1465.31V1320.8ZM1465.23 1320.8V1313.98H1466.43V1320.8ZM1466.35 1320.8V1313.98H1467.55V1320.8ZM1467.47 1320.8V1313.98H1468.67V1320.8ZM1468.59 1320.8V1313.98H1469.79V1320.8ZM1469.71 1320.8V1313.98H1470.91V1320.8ZM1470.84 1320.8V1313.98H1472.04V1320.8ZM1471.96 1320.8V1313.98H1473.16V1320.8ZM1473.08 1320.8V1313.98H1474.28V1320.8ZM1474.2 1320.8V1313.98H1475.4V1320.8ZM1475.32 1320.8V1313.98H1476.52V1320.8ZM1476.44 1320.8V1313.98H1477.64V1320.8ZM1477.56 1320.8V1313.98H1478.76V1320.8ZM1478.69 1320.8V1313.98H1479.89V1320.8ZM1479.81 1320.8V1313.98H1481.01V1320.8ZM1480.93 1320.8V1313.98H1482.13V1320.8ZM1482.05 1320.8V1313.98H1483.25V1320.8ZM1483.17 1320.8V1313.98H1484.37V1320.8ZM1484.29 1320.8V1313.98H1485.49V1320.8ZM1485.41 1320.8V1313.98H1486.61V1320.8ZM1486.54 1320.8V1313.98H1487.74V1320.8ZM1487.66 1320.8V1313.98H1488.86V1320.8ZM1488.78 1320.8V1313.98H1489.98V1320.8ZM1489.9 1320.8V1313.98H1491.1V1320.8ZM1491.02 1320.8V1313.98H1492.22V1320.8ZM1492.14 1320.8V1313.98H1493.34V1320.8ZM1493.26 1320.8V1313.98H1494.46V1320.8ZM1494.39 1320.8V1313.98H1495.59V1320.8ZM1495.51 1320.8V1313.98H1496.71V1320.8ZM1496.63 1320.8V1313.98H1497.83V1320.8ZM1497.75 1320.8V1313.98H1498.95V1320.8ZM1498.87 1320.8V1313.98H1500.07V1320.8ZM1499.99 1320.8V1313.98H1501.19V1320.8ZM1501.11 1320.8V1313.98H1502.31V1320.8ZM1502.24 1320.8V1313.98H1503.44V1320.8ZM1503.36 1320.8V1313.98H1504.56V1320.8ZM1504.48 1320.8V1306.76H1505.68V1320.8ZM1505.6 1320.8V1306.76H1506.8V1320.8ZM1506.72 1320.8V1306.76H1507.92V1320.8ZM1507.84 1320.8V1306.76H1509.04V1320.8ZM1508.96 1320.8V1306.76H1510.16V1320.8ZM1510.09 1320.8V1306.76H1511.29V1320.8ZM1511.21 1320.8V1306.76H1512.41V1320.8ZM1512.33 1320.8V1306.76H1513.53V1320.8ZM1513.45 1320.8V1306.76H1514.65V1320.8ZM1514.57 1320.8V1299.54H1515.77V1320.8ZM1515.69 1320.8V1299.54H1516.89V1320.8ZM1516.81 1320.8V1306.76H1518.01V1320.8ZM1517.94 1320.8V1306.76H1519.14V1320.8ZM1519.06 1320.8V1306.76H1520.26V1320.8ZM1520.18 1320.8V1306.76H1521.38V1320.8ZM1521.3 1320.8V1306.76H1522.5V1320.8ZM1522.42 1320.8V1306.76H1523.62V1320.8ZM1523.54 1320.8V1306.76H1524.74V1320.8ZM1524.66 1320.8V1306.76H1525.86V1320.8ZM1525.79 1320.8V1306.76H1526.99V1320.8ZM1526.91 1320.8V1306.76H1528.11V1320.8ZM1676.06 1320.8V1277.88H1677.26V1320.8ZM1677.18 1320.8V1277.88H1678.38V1320.8ZM1678.3 1320.8V1285.1H1679.5V1320.8ZM1679.42 1320.8V1285.1H1680.62V1320.8ZM1680.54 1320.8V1285.1H1681.74V1320.8ZM1681.66 1320.8V1277.88H1682.86V1320.8ZM1682.79 1320.8V1277.88H1683.99V1320.8ZM1683.91 1320.8V1277.88H1685.11V1320.8ZM1685.03 1320.8V1277.88H1686.23V1320.8ZM1686.15 1320.8V1277.88H1687.35V1320.8ZM1687.27 1320.8V1285.1H1688.47V1320.8ZM1688.39 1320.8V1285.1H1689.59V1320.8ZM1689.51 1320.8V1299.54H1690.71V1320.8ZM1690.64 1320.8V1299.54H1691.84V1320.8ZM1691.76 1320.8V1292.32H1692.96V1320.8ZM1692.88 1320.8V1292.32H1694.08V1320.8ZM1694 1320.8V1292.32H1695.2V1320.8ZM1695.12 1320.8V1292.32H1696.32V1320.8ZM1696.24 1320.8V1299.54H1697.44V1320.8ZM1697.36 1320.8V1299.54H1698.56V1320.8ZM1698.49 1320.8V1299.54H1699.69V1320.8ZM1699.61 1320.8V1292.32H1700.81V1320.8ZM1700.73 1320.8V1299.54H1701.93V1320.8ZM1701.85 1320.8V1299.54H1703.05V1320.8ZM1702.97 1320.8V1299.54H1704.17V1320.8ZM1704.09 1320.8V1299.54H1705.29V1320.8ZM1705.21 1320.8V1299.54H1706.41V1320.8ZM1706.34 1320.8V1306.76H1707.54V1320.8ZM1707.46 1320.8V1306.76H1708.66V1320.8ZM1708.58 1320.8V1306.76H1709.78V1320.8ZM1709.7 1320.8V1306.76H1710.9V1320.8ZM1710.82 1320.8V1306.76H1712.02V1320.8ZM1711.94 1320.8V1306.76H1713.14V1320.8ZM1713.06 1320.8V1306.76H1714.26V1320.8ZM1714.19 1320.8V1299.54H1715.39V1320.8ZM1715.31 1320.8V1299.54H1716.51V1320.8ZM1716.43 1320.8V1306.76H1717.63V1320.8ZM1717.55 1320.8V1306.76H1718.75V1320.8ZM1718.67 1320.8V1299.54H1719.87V1320.8ZM1719.79 1320.8V1306.76H1720.99V1320.8ZM1720.91 1320.8V1299.54H1722.11V1320.8ZM1722.04 1320.8V1299.54H1723.24V1320.8ZM1723.16 1320.8V1306.76H1724.36V1320.8ZM1724.28 1320.8V1306.76H1725.48V1320.8ZM1725.4 1320.8V1306.76H1726.6V1320.8ZM1726.52 1320.8V1306.76H1727.72V1320.8ZM1727.64 1320.8V1306.76H1728.84V1320.8ZM1728.76 1320.8V1306.76H1729.96V1320.8ZM1729.89 1320.8V1306.76H1731.09V1320.8ZM1731.01 1320.8V1299.54H1732.21V1320.8ZM1732.13 1320.8V1299.54H1733.33V1320.8ZM1733.25 1320.8V1306.76H1734.45V1320.8ZM1734.37 1320.8V1306.76H1735.57V1320.8ZM1735.49 1320.8V1306.76H1736.69V1320.8ZM1736.61 1320.8V1299.54H1737.81V1320.8ZM1737.74 1320.8V1306.76H1738.94V1320.8ZM1738.86 1320.8V1306.76H1740.06V1320.8ZM1739.98 1320.8V1299.54H1741.18V1320.8ZM1741.1 1320.8V1299.54H1742.3V1320.8ZM1742.22 1320.8V1306.76H1743.42V1320.8ZM1743.34 1320.8V1306.76H1744.54V1320.8ZM1744.46 1320.8V1306.76H1745.66V1320.8ZM1745.59 1320.8V1306.76H1746.79V1320.8ZM1746.71 1320.8V1299.54H1747.91V1320.8ZM1747.83 1320.8V1299.54H1749.03V1320.8ZM1748.95 1320.8V1306.76H1750.15V1320.8ZM1750.07 1320.8V1306.76H1751.27V1320.8ZM1751.19 1320.8V1306.76H1752.39V1320.8ZM1752.31 1320.8V1306.76H1753.51V1320.8ZM1753.44 1320.8V1299.54H1754.64V1320.8ZM1754.56 1320.8V1299.54H1755.76V1320.8ZM1755.68 1320.8V1306.76H1756.88V1320.8ZM1756.8 1320.8V1306.76H1758V1320.8ZM1757.92 1320.8V1306.76H1759.12V1320.8ZM1759.04 1320.8V1299.54H1760.24V1320.8ZM1760.16 1320.8V1299.54H1761.36V1320.8ZM1761.29 1320.8V1306.76H1762.49V1320.8ZM1762.41 1320.8V1306.76H1763.61V1320.8ZM1763.53 1320.8V1306.76H1764.73V1320.8ZM1764.65 1320.8V1299.54H1765.85V1320.8ZM1765.77 1320.8V1306.76H1766.97V1320.8ZM1766.89 1320.8V1306.76H1768.09V1320.8ZM1768.01 1320.8V1306.76H1769.21V1320.8ZM1769.14 1320.8V1299.54H1770.34V1320.8ZM1770.26 1320.8V1299.54H1771.46V1320.8ZM1771.38 1320.8V1306.76H1772.58V1320.8ZM1772.5 1320.8V1306.76H1773.7V1320.8ZM1773.62 1320.8V1306.76H1774.82V1320.8ZM1774.74 1320.8V1306.76H1775.94V1320.8ZM1775.86 1320.8V1299.54H1777.06V1320.8ZM1776.99 1320.8V1299.54H1778.19V1320.8ZM1778.11 1320.8V1306.76H1779.31V1320.8ZM1779.23 1320.8V1299.54H1780.43V1320.8ZM1780.35 1320.8V1299.54H1781.55V1320.8ZM1781.47 1320.8V1306.76H1782.67V1320.8ZM1782.59 1320.8V1306.76H1783.79V1320.8ZM1783.71 1320.8V1306.76H1784.91V1320.8ZM1784.84 1320.8V1306.76H1786.04V1320.8ZM1785.96 1320.8V1306.76H1787.16V1320.8ZM1787.08 1320.8V1306.76H1788.28V1320.8ZM1788.2 1320.8V1306.76H1789.4V1320.8ZM1789.32 1320.8V1306.76H1790.52V1320.8ZM1790.44 1320.8V1306.76H1791.64V1320.8ZM1791.56 1320.8V1306.76H1792.76V1320.8ZM1792.69 1320.8V1306.76H1793.89V1320.8ZM1793.81 1320.8V1306.76H1795.01V1320.8ZM1794.93 1320.8V1306.76H1796.13V1320.8ZM1796.05 1320.8V1306.76H1797.25V1320.8ZM1797.17 1320.8V1306.76H1798.37V1320.8ZM1798.29 1320.8V1306.76H1799.49V1320.8ZM1799.41 1320.8V1306.76H1800.61V1320.8ZM1800.54 1320.8V1306.76H1801.74V1320.8ZM1801.66 1320.8V1299.54H1802.86V1320.8ZM1802.78 1320.8V1299.54H1803.98V1320.8ZM1803.9 1320.8V1306.76H1805.1V1320.8ZM1805.02 1320.8V1306.76H1806.22V1320.8ZM1806.14 1320.8V1306.76H1807.34V1320.8ZM1807.26 1320.8V1306.76H1808.46V1320.8ZM1808.39 1320.8V1306.76H1809.59V1320.8ZM1809.51 1320.8V1306.76H1810.71V1320.8ZM1810.63 1320.8V1306.76H1811.83V1320.8ZM1811.75 1320.8V1306.76H1812.95V1320.8ZM1812.87 1320.8V1306.76H1814.07V1320.8ZM1813.99 1320.8V1306.76H1815.19V1320.8ZM1815.11 1320.8V1299.54H1816.31V1320.8ZM1816.24 1320.8V1299.54H1817.44V1320.8ZM1817.36 1320.8V1306.76H1818.56V1320.8ZM1818.48 1320.8V1306.76H1819.68V1320.8ZM1819.6 1320.8V1306.76H1820.8V1320.8ZM1820.72 1320.8V1306.76H1821.92V1320.8ZM1821.84 1320.8V1306.76H1823.04V1320.8ZM1822.96 1320.8V1306.76H1824.16V1320.8ZM1824.09 1320.8V1306.76H1825.29V1320.8ZM1825.21 1320.8V1306.76H1826.41V1320.8ZM1826.33 1320.8V1306.76H1827.53V1320.8ZM1827.45 1320.8V1306.76H1828.65V1320.8ZM1828.57 1320.8V1299.54H1829.77V1320.8ZM1829.69 1320.8V1299.54H1830.89V1320.8ZM1830.81 1320.8V1306.76H1832.01V1320.8ZM1831.94 1320.8V1299.54H1833.14V1320.8ZM1833.06 1320.8V1299.54H1834.26V1320.8ZM1834.18 1320.8V1306.76H1835.38V1320.8ZM1835.3 1320.8V1306.76H1836.5V1320.8ZM1836.42 1320.8V1306.76H1837.62V1320.8ZM1837.54 1320.8V1306.76H1838.74V1320.8ZM1838.66 1320.8V1306.76H1839.86V1320.8ZM1839.79 1320.8V1306.76H1840.99V1320.8ZM1840.91 1320.8V1306.76H1842.11V1320.8ZM1842.03 1320.8V1306.76H1843.23V1320.8ZM1843.15 1320.8V1306.76H1844.35V1320.8ZM1844.27 1320.8V1299.54H1845.47V1320.8ZM1845.39 1320.8V1292.32H1846.59V1320.8ZM1846.51 1320.8V1299.54H1847.71V1320.8ZM1847.64 1320.8V1299.54H1848.84V1320.8ZM1848.76 1320.8V1299.54H1849.96V1320.8ZM1849.88 1320.8V1306.76H1851.08V1320.8ZM1851 1320.8V1299.54H1852.2V1320.8ZM1852.12 1320.8V1299.54H1853.32V1320.8ZM1853.24 1320.8V1306.76H1854.44V1320.8ZM1854.36 1320.8V1299.54H1855.56V1320.8ZM1855.49 1320.8V1299.54H1856.69V1320.8ZM1856.61 1320.8V1306.76H1857.81V1320.8ZM1857.73 1320.8V1306.76H1858.93V1320.8ZM1858.85 1320.8V1306.76H1860.05V1320.8ZM1859.97 1320.8V1306.76H1861.17V1320.8ZM1861.09 1320.8V1306.76H1862.29V1320.8ZM1862.21 1320.8V1306.76H1863.41V1320.8ZM1863.34 1320.8V1306.76H1864.54V1320.8ZM1864.46 1320.8V1306.76H1865.66V1320.8ZM1865.58 1320.8V1306.76H1866.78V1320.8ZM1866.7 1320.8V1299.54H1867.9V1320.8ZM1867.82 1320.8V1299.54H1869.02V1320.8ZM1868.94 1320.8V1306.76H1870.14V1320.8ZM1870.06 1320.8V1306.76H1871.26V1320.8ZM1871.19 1320.8V1306.76H1872.39V1320.8ZM1872.31 1320.8V1306.76H1873.51V1320.8ZM1873.43 1320.8V1306.76H1874.63V1320.8ZM1874.55 1320.8V1306.76H1875.75V1320.8ZM1875.67 1320.8V1306.76H1876.87V1320.8ZM1876.79 1320.8V1299.54H1877.99V1320.8ZM1877.91 1320.8V1299.54H1879.11V1320.8ZM1879.04 1320.8V1306.76H1880.24V1320.8ZM1880.16 1320.8V1306.76H1881.36V1320.8ZM1881.28 1320.8V1306.76H1882.48V1320.8ZM1882.4 1320.8V1306.76H1883.6V1320.8ZM1883.52 1320.8V1306.76H1884.72V1320.8ZM1884.64 1320.8V1306.76H1885.84V1320.8ZM1885.76 1320.8V1306.76H1886.96V1320.8ZM1886.89 1320.8V1306.76H1888.09V1320.8ZM1888.01 1320.8V1306.76H1889.21V1320.8ZM1889.13 1320.8V1306.76H1890.33V1320.8ZM1890.25 1320.8V1306.76H1891.45V1320.8ZM1891.37 1320.8V1306.76H1892.57V1320.8ZM1892.49 1320.8V1299.54H1893.69V1320.8ZM1893.61 1320.8V1299.54H1894.81V1320.8ZM1894.74 1320.8V1306.76H1895.94V1320.8ZM1895.86 1320.8V1306.76H1897.06V1320.8ZM1896.98 1320.8V1306.76H1898.18V1320.8ZM1898.1 1320.8V1306.76H1899.3V1320.8ZM1899.22 1320.8V1306.76H1900.42V1320.8ZM1900.34 1320.8V1306.76H1901.54V1320.8ZM1901.46 1320.8V1306.76H1902.66V1320.8ZM1902.59 1320.8V1306.76H1903.79V1320.8ZM1903.71 1320.8V1306.76H1904.91V1320.8ZM1904.83 1320.8V1306.76H1906.03V1320.8ZM1905.95 1320.8V1292.32H1907.15V1320.8ZM1907.07 1320.8V1292.32H1908.27V1320.8ZM1908.19 1320.8V1306.76H1909.39V1320.8ZM1909.31 1320.8V1299.54H1910.51V1320.8ZM1910.44 1320.8V1299.54H1911.64V1320.8ZM1911.56 1320.8V1306.76H1912.76V1320.8ZM1912.68 1320.8V1306.76H1913.88V1320.8ZM1913.8 1320.8V1306.76H1915V1320.8ZM1914.92 1320.8V1306.76H1916.12V1320.8ZM1916.04 1320.8V1299.54H1917.24V1320.8ZM1917.16 1320.8V1299.54H1918.36V1320.8ZM1918.29 1320.8V1306.76H1919.49V1320.8ZM1919.41 1320.8V1299.54H1920.61V1320.8ZM1920.53 1320.8V1299.54H1921.73V1320.8ZM1921.65 1320.8V1306.76H1922.85V1320.8ZM1922.77 1320.8V1306.76H1923.97V1320.8ZM1923.89 1320.8V1306.76H1925.09V1320.8ZM1925.01 1320.8V1306.76H1926.21V1320.8ZM1926.14 1320.8V1306.76H1927.34V1320.8ZM1927.26 1320.8V1306.76H1928.46V1320.8ZM1928.38 1320.8V1306.76H1929.58V1320.8ZM1929.5 1320.8V1306.76H1930.7V1320.8ZM1930.62 1320.8V1306.76H1931.82V1320.8ZM1931.74 1320.8V1299.54H1932.94V1320.8ZM1932.86 1320.8V1299.54H1934.06V1320.8ZM1933.99 1320.8V1306.76H1935.19V1320.8ZM1935.11 1320.8V1306.76H1936.31V1320.8ZM1936.23 1320.8V1306.76H1937.43V1320.8ZM1937.35 1320.8V1306.76H1938.55V1320.8ZM1938.47 1320.8V1306.76H1939.67V1320.8ZM1939.59 1320.8V1306.76H1940.79V1320.8ZM1940.71 1320.8V1306.76H1941.91V1320.8ZM1941.84 1320.8V1299.54H1943.04V1320.8ZM1942.96 1320.8V1299.54H1944.16V1320.8ZM1944.08 1320.8V1306.76H1945.28V1320.8ZM1945.2 1320.8V1299.54H1946.4V1320.8ZM1946.32 1320.8V1299.54H1947.52V1320.8ZM1947.44 1320.8V1306.76H1948.64V1320.8ZM1948.56 1320.8V1299.54H1949.76V1320.8ZM1949.69 1320.8V1306.76H1950.89V1320.8ZM1950.81 1320.8V1306.76H1952.01V1320.8ZM1951.93 1320.8V1306.76H1953.13V1320.8ZM1953.05 1320.8V1306.76H1954.25V1320.8ZM1954.17 1320.8V1306.76H1955.37V1320.8ZM1955.29 1320.8V1306.76H1956.49V1320.8ZM1956.41 1320.8V1306.76H1957.61V1320.8ZM1957.54 1320.8V1306.76H1958.74V1320.8ZM1958.66 1320.8V1306.76H1959.86V1320.8ZM1959.78 1320.8V1306.76H1960.98V1320.8ZM1960.9 1320.8V1306.76H1962.1V1320.8ZM1962.02 1320.8V1306.76H1963.22V1320.8ZM1963.14 1320.8V1306.76H1964.34V1320.8ZM1964.26 1320.8V1306.76H1965.46V1320.8ZM1965.39 1320.8V1306.76H1966.59V1320.8ZM1966.51 1320.8V1306.76H1967.71V1320.8ZM1967.63 1320.8V1306.76H1968.83V1320.8ZM1968.75 1320.8V1306.76H1969.95V1320.8ZM1969.87 1320.8V1306.76H1971.07V1320.8ZM1970.99 1320.8V1306.76H1972.19V1320.8ZM1972.11 1320.8V1306.76H1973.31V1320.8ZM1973.24 1320.8V1306.76H1974.44V1320.8ZM1974.36 1320.8V1299.54H1975.56V1320.8ZM1975.48 1320.8V1299.54H1976.68V1320.8ZM1976.6 1320.8V1299.54H1977.8V1320.8ZM1977.72 1320.8V1299.54H1978.92V1320.8ZM1978.84 1320.8V1299.54H1980.04V1320.8ZM1979.96 1320.8V1299.54H1981.16V1320.8ZM1981.09 1320.8V1306.76H1982.29V1320.8ZM1982.21 1320.8V1306.76H1983.41V1320.8ZM1983.33 1320.8V1306.76H1984.53V1320.8ZM1984.45 1320.8V1306.76H1985.65V1320.8ZM1985.57 1320.8V1306.76H1986.77V1320.8ZM1986.69 1320.8V1306.76H1987.89V1320.8ZM1987.81 1320.8V1306.76H1989.01V1320.8ZM1988.94 1320.8V1306.76H1990.14V1320.8ZM1990.06 1320.8V1306.76H1991.26V1320.8ZM1991.18 1320.8V1306.76H1992.38V1320.8ZM1992.3 1320.8V1306.76H1993.5V1320.8ZM1993.42 1320.8V1306.76H1994.62V1320.8ZM1994.54 1320.8V1306.76H1995.74V1320.8ZM1995.66 1320.8V1306.76H1996.86V1320.8ZM1996.79 1320.8V1306.76H1997.99V1320.8ZM1997.91 1320.8V1306.76H1999.11V1320.8ZM1999.03 1320.8V1306.76H2000.23V1320.8ZM2000.15 1320.8V1306.76H2001.35V1320.8ZM2001.27 1320.8V1306.76H2002.47V1320.8ZM2002.39 1320.8V1306.76H2003.59V1320.8ZM2003.51 1320.8V1299.54H2004.71V1320.8ZM2004.64 1320.8V1299.54H2005.84V1320.8ZM2005.76 1320.8V1306.76H2006.96V1320.8ZM2006.88 1320.8V1306.76H2008.08V1320.8ZM2008 1320.8V1306.76H2009.2V1320.8ZM2009.12 1320.8V1306.76H2010.32V1320.8ZM2010.24 1320.8V1306.76H2011.44V1320.8ZM2011.36 1320.8V1306.76H2012.56V1320.8ZM2012.49 1320.8V1306.76H2013.69V1320.8ZM2013.61 1320.8V1306.76H2014.81V1320.8ZM2014.73 1320.8V1306.76H2015.93V1320.8ZM2015.85 1320.8V1306.76H2017.05V1320.8ZM2016.97 1320.8V1306.76H2018.17V1320.8ZM2018.09 1320.8V1306.76H2019.29V1320.8ZM2019.21 1320.8V1306.76H2020.41V1320.8ZM2020.34 1320.8V1306.76H2021.54V1320.8ZM2021.46 1320.8V1306.76H2022.66V1320.8ZM2022.58 1320.8V1306.76H2023.78V1320.8ZM2023.7 1320.8V1306.76H2024.9V1320.8ZM2024.82 1320.8V1306.76H2026.02V1320.8ZM2025.94 1320.8V1306.76H2027.14V1320.8ZM2027.06 1320.8V1306.76H2028.26V1320.8ZM2028.19 1320.8V1306.76H2029.39V1320.8ZM2029.31 1320.8V1306.76H2030.51V1320.8ZM2030.43 1320.8V1306.76H2031.63V1320.8ZM2031.55 1320.8V1306.76H2032.75V1320.8ZM2032.67 1320.8V1306.76H2033.87V1320.8ZM2033.79 1320.8V1306.76H2034.99V1320.8ZM2034.91 1320.8V1306.76H2036.11V1320.8ZM2036.04 1320.8V1306.76H2037.24V1320.8ZM2037.16 1320.8V1306.76H2038.36V1320.8ZM2038.28 1320.8V1306.76H2039.48V1320.8ZM2039.4 1320.8V1306.76H2040.6V1320.8ZM2040.52 1320.8V1306.76H2041.72V1320.8ZM2041.64 1320.8V1306.76H2042.84V1320.8ZM2042.76 1320.8V1306.76H2043.96V1320.8ZM2043.89 1320.8V1306.76H2045.09V1320.8ZM2045.01 1320.8V1306.76H2046.21V1320.8ZM2046.13 1320.8V1306.76H2047.33V1320.8ZM2047.25 1320.8V1306.76H2048.45V1320.8ZM2048.37 1320.8V1306.76H2049.57V1320.8ZM2049.49 1320.8V1306.76H2050.69V1320.8ZM2050.61 1320.8V1306.76H2051.81V1320.8ZM2051.74 1320.8V1306.76H2052.94V1320.8ZM2052.86 1320.8V1306.76H2054.06V1320.8ZM2053.98 1320.8V1306.76H2055.18V1320.8ZM2055.1 1320.8V1306.76H2056.3V1320.8ZM2056.22 1320.8V1306.76H2057.42V1320.8ZM2057.34 1320.8V1306.76H2058.54V1320.8ZM2058.46 1320.8V1306.76H2059.66V1320.8ZM2059.59 1320.8V1306.76H2060.79V1320.8ZM2060.71 1320.8V1306.76H2061.91V1320.8ZM2061.83 1320.8V1306.76H2063.03V1320.8ZM2062.95 1320.8V1306.76H2064.15V1320.8ZM2064.07 1320.8V1306.76H2065.27V1320.8ZM2065.19 1320.8V1306.76H2066.39V1320.8ZM2066.31 1320.8V1306.76H2067.51V1320.8ZM2067.44 1320.8V1306.76H2068.64V1320.8ZM2068.56 1320.8V1306.76H2069.76V1320.8ZM2069.68 1320.8V1306.76H2070.88V1320.8ZM2070.8 1320.8V1306.76H2072V1320.8ZM2071.92 1320.8V1306.76H2073.12V1320.8ZM2073.04 1320.8V1306.76H2074.24V1320.8ZM2074.16 1320.8V1306.76H2075.36V1320.8ZM2075.29 1320.8V1306.76H2076.49V1320.8ZM2076.41 1320.8V1306.76H2077.61V1320.8ZM2077.53 1320.8V1306.76H2078.73V1320.8ZM2078.65 1320.8V1306.76H2079.85V1320.8ZM2079.77 1320.8V1306.76H2080.97V1320.8ZM2080.89 1320.8V1306.76H2082.09V1320.8ZM2082.01 1320.8V1306.76H2083.21V1320.8ZM2083.14 1320.8V1306.76H2084.34V1320.8ZM2084.26 1320.8V1306.76H2085.46V1320.8ZM2085.38 1320.8V1306.76H2086.58V1320.8ZM2086.5 1320.8V1306.76H2087.7V1320.8ZM2087.62 1320.8V1306.76H2088.82V1320.8ZM2088.74 1320.8V1306.76H2089.94V1320.8ZM2089.86 1320.8V1306.76H2091.06V1320.8ZM2090.99 1320.8V1306.76H2092.19V1320.8ZM2092.11 1320.8V1306.76H2093.31V1320.8ZM2093.23 1320.8V1306.76H2094.43V1320.8ZM2094.35 1320.8V1313.98H2095.55V1320.8ZM2095.47 1320.8V1299.54H2096.67V1320.8ZM2096.59 1320.8V1306.76H2097.79V1320.8ZM2097.71 1320.8V1306.76H2098.91V1320.8ZM2098.84 1320.8V1306.76H2100.04V1320.8ZM2099.96 1320.8V1306.76H2101.16V1320.8ZM2101.08 1320.8V1313.98H2102.28V1320.8ZM2102.2 1320.8V1299.54H2103.4V1320.8ZM2103.32 1320.8V1299.54H2104.52V1320.8ZM2104.44 1320.8V1292.32H2105.64V1320.8ZM2105.56 1320.8V1299.54H2106.76V1320.8ZM2106.69 1320.8V1299.54H2107.89V1320.8ZM2107.81 1320.8V1306.76H2109.01V1320.8ZM2108.93 1320.8V1313.98H2110.13V1320.8ZM2110.05 1320.8V1299.54H2111.25V1320.8ZM2111.17 1320.8V1306.76H2112.37V1320.8ZM2112.29 1320.8V1306.76H2113.49V1320.8ZM2113.41 1320.8V1306.76H2114.61V1320.8ZM2114.54 1320.8V1306.76H2115.74V1320.8ZM2115.66 1320.8V1313.98H2116.86V1320.8ZM2116.78 1320.8V1306.76H2117.98V1320.8ZM2117.9 1320.8V1306.76H2119.1V1320.8ZM2119.02 1320.8V1306.76H2120.22V1320.8ZM2120.14 1320.8V1306.76H2121.34V1320.8ZM2121.26 1320.8V1306.76H2122.46V1320.8ZM2122.39 1320.8V1306.76H2123.59V1320.8ZM2123.51 1320.8V1306.76H2124.71V1320.8ZM2124.63 1320.8V1306.76H2125.83V1320.8ZM2125.75 1320.8V1306.76H2126.95V1320.8ZM2126.87 1320.8V1306.76H2128.07V1320.8ZM2127.99 1320.8V1306.76H2129.19V1320.8ZM2129.11 1320.8V1306.76H2130.31V1320.8ZM2130.24 1320.8V1313.98H2131.44V1320.8ZM2131.36 1320.8V1299.54H2132.56V1320.8ZM2132.48 1320.8V1313.98H2133.68V1320.8ZM2133.6 1320.8V1306.76H2134.8V1320.8ZM2134.72 1320.8V1306.76H2135.92V1320.8ZM2135.84 1320.8V1306.76H2137.04V1320.8ZM2136.96 1320.8V1306.76H2138.16V1320.8ZM2138.09 1320.8V1306.76H2139.29V1320.8ZM2139.21 1320.8V1306.76H2140.41V1320.8ZM2140.33 1320.8V1306.76H2141.53V1320.8ZM2141.45 1320.8V1306.76H2142.65V1320.8ZM2142.57 1320.8V1306.76H2143.77V1320.8ZM2143.69 1320.8V1306.76H2144.89V1320.8ZM2144.81 1320.8V1306.76H2146.01V1320.8ZM2145.94 1320.8V1313.98H2147.14V1320.8ZM2147.06 1320.8V1299.54H2148.26V1320.8ZM2148.18 1320.8V1313.98H2149.38V1320.8ZM2149.3 1320.8V1306.76H2150.5V1320.8ZM2150.42 1320.8V1306.76H2151.62V1320.8ZM2151.54 1320.8V1306.76H2152.74V1320.8ZM2152.66 1320.8V1306.76H2153.86V1320.8ZM2153.79 1320.8V1306.76H2154.99V1320.8ZM2154.91 1320.8V1306.76H2156.11V1320.8ZM2156.03 1320.8V1306.76H2157.23V1320.8ZM2157.15 1320.8V1306.76H2158.35V1320.8ZM2158.27 1320.8V1306.76H2159.47V1320.8ZM2159.39 1320.8V1306.76H2160.59V1320.8ZM2160.51 1320.8V1306.76H2161.71V1320.8ZM2161.64 1320.8V1306.76H2162.84V1320.8ZM2162.76 1320.8V1306.76H2163.96V1320.8ZM2163.88 1320.8V1306.76H2165.08V1320.8ZM2165 1320.8V1306.76H2166.2V1320.8ZM2166.12 1320.8V1306.76H2167.32V1320.8ZM2167.24 1320.8V1299.54H2168.44V1320.8ZM2168.36 1320.8V1306.76H2169.56V1320.8ZM2169.49 1320.8V1306.76H2170.69V1320.8ZM2170.61 1320.8V1306.76H2171.81V1320.8ZM2171.73 1320.8V1306.76H2172.93V1320.8ZM2172.85 1320.8V1306.76H2174.05V1320.8ZM2173.97 1320.8V1306.76H2175.17V1320.8ZM2175.09 1320.8V1306.76H2176.29V1320.8ZM2176.21 1320.8V1306.76H2177.41V1320.8ZM2177.34 1320.8V1306.76H2178.54V1320.8ZM2178.46 1320.8V1313.98H2179.66V1320.8ZM2179.58 1320.8V1299.54H2180.78V1320.8ZM2180.7 1320.8V1313.98H2181.9V1320.8ZM2181.82 1320.8V1306.76H2183.02V1320.8ZM2182.94 1320.8V1299.54H2184.14V1320.8ZM2184.06 1320.8V1313.98H2185.26V1320.8ZM2185.19 1320.8V1306.76H2186.39V1320.8ZM2186.31 1320.8V1306.76H2187.51V1320.8ZM2187.43 1320.8V1306.76H2188.63V1320.8ZM2188.55 1320.8V1306.76H2189.75V1320.8ZM2189.67 1320.8V1306.76H2190.87V1320.8ZM2190.79 1320.8V1306.76H2191.99V1320.8ZM2191.91 1320.8V1306.76H2193.11V1320.8ZM2193.04 1320.8V1306.76H2194.24V1320.8ZM2194.16 1320.8V1306.76H2195.36V1320.8ZM2195.28 1320.8V1306.76H2196.48V1320.8ZM2196.4 1320.8V1306.76H2197.6V1320.8ZM2197.52 1320.8V1306.76H2198.72V1320.8ZM2198.64 1320.8V1306.76H2199.84V1320.8ZM2199.76 1320.8V1306.76H2200.96V1320.8ZM2200.89 1320.8V1306.76H2202.09V1320.8ZM2202.01 1320.8V1306.76H2203.21V1320.8ZM2203.13 1320.8V1306.76H2204.33V1320.8ZM2204.25 1320.8V1306.76H2205.45V1320.8ZM2205.37 1320.8V1299.54H2206.57V1320.8ZM2206.49 1320.8V1313.98H2207.69V1320.8ZM2207.61 1320.8V1306.76H2208.81V1320.8ZM2208.74 1320.8V1306.76H2209.94V1320.8ZM2209.86 1320.8V1306.76H2211.06V1320.8ZM2210.98 1320.8V1306.76H2212.18V1320.8ZM2212.1 1320.8V1299.54H2213.3V1320.8ZM2213.22 1320.8V1313.98H2214.42V1320.8ZM2214.34 1320.8V1306.76H2215.54V1320.8ZM2215.46 1320.8V1306.76H2216.66V1320.8ZM2216.59 1320.8V1306.76H2217.79V1320.8ZM2217.71 1320.8V1306.76H2218.91V1320.8ZM2218.83 1320.8V1306.76H2220.03V1320.8ZM2219.95 1320.8V1306.76H2221.15V1320.8ZM2221.07 1320.8V1306.76H2222.27V1320.8ZM2222.19 1320.8V1306.76H2223.39V1320.8ZM2223.31 1320.8V1306.76H2224.51V1320.8ZM2224.44 1320.8V1299.54H2225.64V1320.8ZM2225.56 1320.8V1306.76H2226.76V1320.8ZM2226.68 1320.8V1306.76H2227.88V1320.8ZM2227.8 1320.8V1306.76H2229V1320.8ZM2228.92 1320.8V1306.76H2230.12V1320.8ZM2230.04 1320.8V1299.54H2231.24V1320.8ZM2231.16 1320.8V1292.32H2232.36V1320.8ZM2232.29 1320.8V1299.54H2233.49V1320.8ZM2233.41 1320.8V1299.54H2234.61V1320.8ZM2234.53 1320.8V1313.98H2235.73V1320.8ZM2235.65 1320.8V1306.76H2236.85V1320.8ZM2236.77 1320.8V1313.98H2237.97V1320.8ZM2237.89 1320.8V1306.76H2239.09V1320.8ZM2239.01 1320.8V1313.98H2240.21V1320.8ZM2240.14 1320.8V1313.98H2241.34V1320.8ZM2241.26 1320.8V1306.76H2242.46V1320.8ZM2242.38 1320.8V1313.98H2243.58V1320.8ZM2243.5 1320.8V1306.76H2244.7V1320.8ZM2244.62 1320.8V1313.98H2245.82V1320.8ZM2245.74 1320.8V1313.98H2246.94V1320.8ZM2246.86 1320.8V1306.76H2248.06V1320.8ZM2247.99 1320.8V1313.98H2249.19V1320.8ZM2249.11 1320.8V1313.98H2250.31V1320.8ZM2250.23 1320.8V1306.76H2251.43V1320.8ZM2251.35 1320.8V1313.98H2252.55V1320.8ZM2252.47 1320.8V1306.76H2253.67V1320.8ZM2253.59 1320.8V1313.98H2254.79V1320.8ZM2254.71 1320.8V1313.98H2255.91V1320.8ZM2255.84 1320.8V1306.76H2257.04V1320.8ZM2256.96 1320.8V1306.76H2258.16V1320.8ZM2258.08 1320.8V1306.76H2259.28V1320.8ZM2259.2 1320.8V1313.98H2260.4V1320.8ZM2260.32 1320.8V1313.98H2261.52V1320.8ZM2261.44 1320.8V1306.76H2262.64V1320.8ZM2262.56 1320.8V1313.98H2263.76V1320.8ZM2263.69 1320.8V1313.98H2264.89V1320.8ZM2264.81 1320.8V1313.98H2266.01V1320.8ZM2265.93 1320.8V1306.76H2267.13V1320.8ZM2267.05 1320.8V1313.98H2268.25V1320.8ZM2268.17 1320.8V1313.98H2269.37V1320.8ZM2269.29 1320.8V1313.98H2270.49V1320.8ZM2270.41 1320.8V1306.76H2271.61V1320.8ZM2271.54 1320.8V1313.98H2272.74V1320.8ZM2272.66 1320.8V1313.98H2273.86V1320.8ZM2273.78 1320.8V1306.76H2274.98V1320.8ZM2274.9 1320.8V1313.98H2276.1V1320.8ZM2276.02 1320.8V1313.98H2277.22V1320.8ZM2277.14 1320.8V1306.76H2278.34V1320.8ZM2278.26 1320.8V1313.98H2279.46V1320.8ZM2279.39 1320.8V1313.98H2280.59V1320.8ZM2280.51 1320.8V1306.76H2281.71V1320.8ZM2281.63 1320.8V1313.98H2282.83V1320.8ZM2282.75 1320.8V1313.98H2283.95V1320.8ZM2283.87 1320.8V1306.76H2285.07V1320.8ZM2284.99 1320.8V1313.98H2286.19V1320.8ZM2286.11 1320.8V1313.98H2287.31V1320.8ZM2287.24 1320.8V1313.98H2288.44V1320.8ZM2288.36 1320.8V1313.98H2289.56V1320.8ZM2289.48 1320.8V1306.76H2290.68V1320.8ZM2290.6 1320.8V1313.98H2291.8V1320.8ZM2291.72 1320.8V1313.98H2292.92V1320.8ZM2292.84 1320.8V1306.76H2294.04V1320.8ZM2293.96 1320.8V1313.98H2295.16V1320.8ZM2295.09 1320.8V1313.98H2296.29V1320.8ZM2296.21 1320.8V1306.76H2297.41V1320.8ZM2297.33 1320.8V1313.98H2298.53V1320.8ZM2298.45 1320.8V1313.98H2299.65V1320.8ZM2299.57 1320.8V1313.98H2300.77V1320.8ZM2300.69 1320.8V1306.76H2301.89V1320.8ZM2301.81 1320.8V1313.98H2303.01V1320.8ZM2302.94 1320.8V1313.98H2304.14V1320.8ZM2304.06 1320.8V1313.98H2305.26V1320.8ZM2305.18 1320.8V1306.76H2306.38V1320.8ZM2306.3 1320.8V1313.98H2307.5V1320.8ZM2307.42 1320.8V1313.98H2308.62V1320.8ZM2308.54 1320.8V1313.98H2309.74V1320.8Z" fill="#9fecc3" stroke="#9fecc3" stroke-opacity="0.55" stroke-width="1.3"/>
<path d="M155.6 1321.3H2416.4" stroke="#808080" stroke-width="1.4" fill="none"/><path d="M155.6 814.4V1322" stroke="#6a6a6a" stroke-width="2.2" fill="none"/><path d="M155.6 1320.8h-11M155.6 1248.6h-11M155.6 1176.4h-11M155.6 1104.2h-11M155.6 1032h-11M155.6 959.8h-11M155.6 887.6h-11M155.6 815.4h-11M155.6 1322.3v10.5M478.57 1322.3v10.5M801.54 1322.3v10.5M1124.51 1322.3v10.5M1447.49 1322.3v10.5M1770.46 1322.3v10.5M2093.43 1322.3v10.5" stroke="#8c8c8c" stroke-width="1.2" fill="none"/>
<text class="ax" style="font-size:20px" x="133.1" y="1327" text-anchor="end">0</text><text class="ax" style="font-size:20px" x="133.1" y="1254.8" text-anchor="end">10</text><text class="ax" style="font-size:20px" x="133.1" y="1182.6" text-anchor="end">20</text><text class="ax" style="font-size:20px" x="133.1" y="1110.4" text-anchor="end">30</text><text class="ax" style="font-size:20px" x="133.1" y="1038.2" text-anchor="end">40</text><text class="ax" style="font-size:20px" x="133.1" y="966" text-anchor="end">50</text><text class="ax" style="font-size:20px" x="133.1" y="893.8" text-anchor="end">60</text><text class="ax" style="font-size:20px" x="133.1" y="821.6" text-anchor="end">70</text><text class="ax" style="fill:#111;font-size:20px;letter-spacing:0.25px" x="155.6" y="1356" text-anchor="middle">lun. 06</text><text class="ax" style="fill:#111;font-size:20px;letter-spacing:0.25px" x="478.57" y="1356" text-anchor="middle">mar. 07</text><text class="ax" style="fill:#111;font-size:20px;letter-spacing:0.25px" x="801.54" y="1356" text-anchor="middle">mer. 08</text><text class="ax" style="fill:#111;font-size:20px;letter-spacing:0.25px" x="1124.51" y="1356" text-anchor="middle">jeu. 09</text><text class="ax" style="fill:#111;font-size:20px;letter-spacing:0.25px" x="1447.49" y="1356" text-anchor="middle">ven. 10</text><text class="ax" style="fill:#111;font-size:20px;letter-spacing:0.25px" x="1770.46" y="1356" text-anchor="middle">sam. 11</text><text class="ax" style="fill:#111;font-size:20px;letter-spacing:0.25px" x="2093.43" y="1356" text-anchor="middle">dim. 12</text><text class="ax" style="font-size:21px" transform="translate(86.5 1068) rotate(-90)" text-anchor="middle">kW</text>
</svg>
<!-- ecowatt banner -->
<div class="abs" style="left:176.5px;top:49px;width:481.5px;height:78px;background:#0a0917"></div>
<svg width="2511" height="1415" viewBox="0 0 2511 1415" style="pointer-events:none">
<defs>
<linearGradient id="eg" x1="0" y1="0" x2="0" y2="1" gradientUnits="objectBoundingBox">
<stop offset="0" stop-color="#00f2cb"/><stop offset="0.6" stop-color="#00efc8"/><stop offset="0.68" stop-color="#00b79a"/><stop offset="0.8" stop-color="#00bfa1"/><stop offset="1" stop-color="#00caa9"/>
</linearGradient>
<linearGradient id="tg" x1="0" y1="0" x2="0" y2="1">
<stop offset="0" stop-color="#00d4b1"/><stop offset="1" stop-color="#00af92"/>
</linearGradient>
<g id="tile">
<rect x="0" y="0" width="106.1" height="55.1" fill="url(#tg)"/>
<path d="M14 0C40 20 62 25.5 76 25C88 24.5 98 21 106.1 16L106.1 0Z" fill="#00f0cc"/>
<path d="M28 0C48 8 60 10.5 72 10.3C85 10 97 7.5 106.1 3.8L106.1 0Z" fill="#00a28a"/>
</g>
</defs>
<!-- ecowatt wordmark -->
<g transform="translate(187.6 109.7) scale(0.86 1)" font-family="'Liberation Sans',sans-serif" font-weight="bold" font-size="58" stroke="#0a0917" stroke-width="1.3">
<text x="0 32.6 65.2" y="0" fill="url(#eg)">éco</text>
<text x="98.2 143.8 176 195.4" y="0" fill="#fff">watt</text>
</g>
<path d="M300.2 108.4L313.8 67" stroke="#fff" stroke-width="6.4" stroke-linecap="round" fill="none"/>
<!-- Rte -->
<ellipse cx="433.9" cy="89" rx="25.8" ry="27.8" fill="#00b3e3"/>
<text x="434.5" y="96.3" text-anchor="middle" font-family="'Liberation Sans',sans-serif" font-size="23.5" fill="#fff" textLength="32" lengthAdjust="spacingAndGlyphs">Rte</text>
<path d="M421.5 90.4H450" stroke="#fff" stroke-width="1.3"/>
<g font-family="'Liberation Sans',sans-serif" font-size="12.4" fill="#00a3d3">
<text x="468.3" y="78.9">Le réseau</text>
<text x="468.3" y="92.2" textLength="60.5" lengthAdjust="spacingAndGlyphs">de transport</text>
<text x="468.3" y="105.3">d’électricité</text>
</g>
<!-- RF + ADEME -->
<rect x="546.5" y="61" width="100.5" height="56" fill="#fff"/>
<rect x="553.2" y="68.6" width="7.8" height="6.7" fill="#1f2f7f"/>
<rect x="563.6" y="68.6" width="7.8" height="6.7" fill="#e1000f"/>
<g font-family="'Liberation Sans',sans-serif" font-weight="bold" font-size="6.6" fill="#222">
<text x="553" y="84.7" textLength="43" lengthAdjust="spacingAndGlyphs">RÉPUBLIQUE</text>
<text x="553" y="92.8" textLength="40" lengthAdjust="spacingAndGlyphs">FRANÇAISE</text>
</g>
<g font-family="'Liberation Serif',serif" font-style="italic" font-size="3.9" fill="#444">
<text x="553.3" y="99.4">Liberté</text>
<text x="553.3" y="104.5">Égalité</text>
<text x="553.3" y="109.9">Fraternité</text>
</g>
<rect x="607" y="66.7" width="35" height="45" fill="#fff" stroke="#4a7fcb" stroke-width="0.9"/>
<text x="624.4" y="74.7" text-anchor="middle" font-family="'Liberation Sans',sans-serif" font-weight="bold" font-size="6.4" fill="#e30613" textLength="25.4" lengthAdjust="spacing">ADEME</text>
<circle cx="624.2" cy="87" r="8.8" fill="#1d4fae"/>
<path d="M619 83c2-2 4-1 5 1s-1 4 0 6 3 2 4 4M627 80c1 2 3 2 4 4" stroke="#8fb0e6" stroke-width="1.1" fill="none"/>
<g font-family="'Liberation Sans',sans-serif" font-weight="bold" font-size="3.1" fill="#e30613" text-anchor="middle">
<text x="624.4" y="101.5" textLength="25" lengthAdjust="spacing">AGENCE DE LA</text>
<text x="624.4" y="105.2" textLength="25" lengthAdjust="spacing">TRANSITION</text>
<text x="624.4" y="108.9" textLength="25" lengthAdjust="spacing">ÉCOLOGIQUE</text>
</g>
<!-- ecowatt table -->
<path fill="#dbdbdb" fill-rule="evenodd" d="M169.3 135.7h491.8v123.2h-491.8zM172.4 139v49h117v-49zM294.6 139v49h117v-49zM416.8 139v49h116.5v-49zM538.5 139v49h117v-49zM172.4 194.3v59h117v-59zM294.6 194.3v59h117v-59zM416.8 194.3v59h116.5v-59zM538.5 194.3v59h117v-59z"/>
<g fill="none" stroke="#ececec" stroke-width="1">
<rect x="172.9" y="139.5" width="116" height="48"/><rect x="295.1" y="139.5" width="116" height="48"/><rect x="417.3" y="139.5" width="115.5" height="48"/><rect x="539" y="139.5" width="116" height="48"/>
<rect x="172.9" y="194.8" width="116" height="58"/><rect x="295.1" y="194.8" width="116" height="58"/><rect x="417.3" y="194.8" width="115.5" height="58"/><rect x="539" y="194.8" width="116" height="58"/>
</g>
<g font-family="'Liberation Sans',sans-serif" font-size="30" fill="#0a0a0a" stroke="#0a0a0a" stroke-width="0.5">
<text x="221.3" y="174.8"><tspan font-size="35">J</tspan></text>
<text x="311.4 330 344.8 362 377.9" y="174.8"><tspan font-size="35">J</tspan> + 1</text>
<text x="433.4 452 466.9 484 499.4" y="174.8"><tspan font-size="35">J</tspan> + <tspan font-weight="bold">2</tspan></text>
<text x="555.6 574 589 606 621.6" y="174.8"><tspan font-size="35">J</tspan> + <tspan font-weight="bold">3</tspan></text>
</g>
<use href="#tile" x="180.1" y="194.8"/>
<use href="#tile" x="301.9" y="196.3"/>
<use href="#tile" x="424" y="196.3"/>
<use href="#tile" x="544.1" y="196.3"/>
</svg>
<!-- right-hand info boxes -->
<div class="abs" style="left:1990px;top:57px;width:416px;height:40.5px;background:#fff;border-radius:9px;box-shadow:0 0 3px #fff;text-align:center;font-weight:bold;font-size:24px;line-height:47px;color:#000" id="ttl">LHB-site-L661</div>
<div class="box" style="left:1990px;top:106px;width:416px;height:62px;line-height:58px" id="b1">Consommation: 43 kWh</div>
<div class="box" style="left:1990px;top:176px;width:416px;height:62px;line-height:58px" id="b2">P Max :  4 kW</div>
<div class="box" style="left:1990px;top:246px;width:416px;height:62px;line-height:58px" id="b3">P min : 1 kW</div>
<!-- date label -->
<div class="abs" style="left:1048px;top:542.3px;width:521.7px;height:69.6px;background:rgba(255,255,255,.92);border-radius:9px;text-align:center;font-weight:bold;font-size:30px;line-height:73px;color:#0d1110;padding-left:10px;box-sizing:border-box" id="dlab">dimanche 12 avril 2026</div>
<!-- bottom info boxes -->
<div class="box" style="left:560px;top:804px;width:416px;height:62px;line-height:58px" id="b4">Consommation: 1 094 kWh</div>
<div class="box" style="left:1098px;top:804px;width:416px;height:62px;line-height:58px" id="b5">P Max :  66 kW</div>
<div class="box" style="left:1608px;top:804px;width:416px;height:62px;line-height:58px" id="b6">P min : 0 kW</div>
<!-- G2E logo -->
<div class="abs" style="left:2322.5px;top:1322px;width:115.5px;height:59px;background:#fff;border-bottom-right-radius:5px"></div>
<svg width="2511" height="1415" viewBox="0 0 2511 1415">
<text y="1363.5" font-family="'DejaVu Sans','Liberation Sans',sans-serif" fill="#0a70b8" stroke="#0a70b8" stroke-width="1.1" stroke-linejoin="round"><tspan x="2332.6" font-size="40.5">G</tspan><tspan x="2364.6" font-size="36">2</tspan></text>
<path d="M2392.5 1324.6L2383.5 1338.4L2391.6 1341L2389.4 1363.1L2399.9 1338.4L2391.6 1335.3Z" fill="#eb5b27"/>
<path d="M2403.4 1339.3H2424.5L2418.8 1344.7H2401ZM2399.5 1348.2H2417.9L2412.6 1353.7H2397.1ZM2395.6 1357.2H2416.6L2411.1 1362.9H2393.1Z" fill="#f39120"/>
<text x="2393.8" y="1334.5" font-family="'Liberation Sans',sans-serif" font-weight="bold" font-size="7.2" fill="#ec6030" textLength="30.2" lengthAdjust="spacingAndGlyphs">FRANCE</text>
<text x="2339.7" y="1368.2" font-family="'Liberation Sans',sans-serif" font-size="3.9" fill="#2a80c2" textLength="74.3" lengthAdjust="spacingAndGlyphs">Optimisation des ressources énergétiques</text>
</svg>
</body></html>
